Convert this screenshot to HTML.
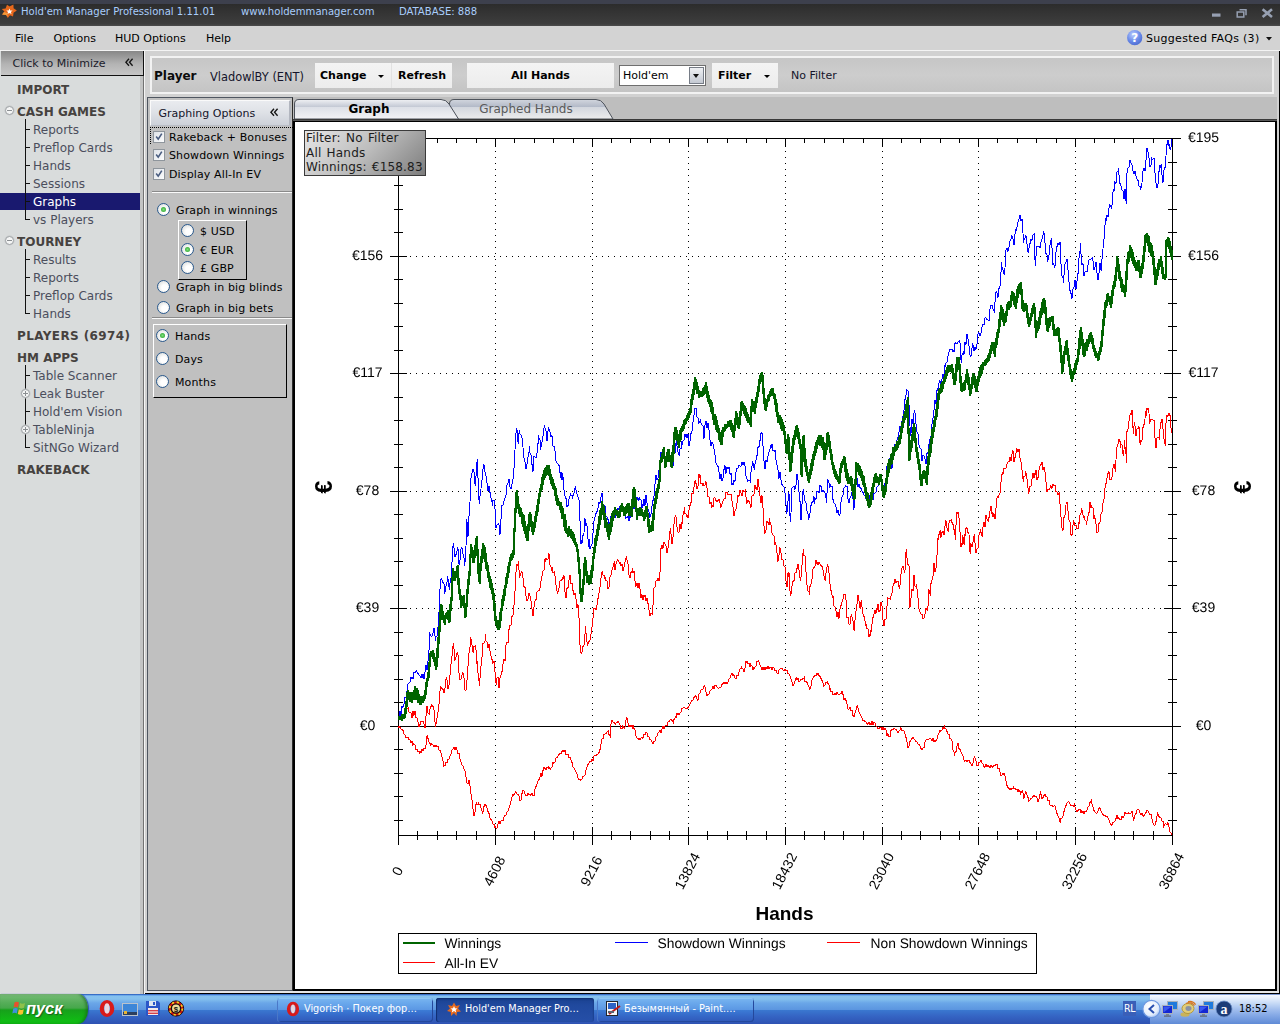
<!DOCTYPE html>
<html lang="en">
<head>
<meta charset="utf-8">
<title>Hold'em Manager Professional</title>
<style>
*{box-sizing:border-box;margin:0;padding:0}
html,body{width:1280px;height:1024px;overflow:hidden;background:#c0c0c0}
body{position:relative;font-family:"DejaVu Sans","Liberation Sans",sans-serif;font-size:12px;color:#000}
.abs{position:absolute}
/* title */
#topstrip{left:0;top:0;width:1280px;height:5px;background:#3d404d}
#titlebar{left:0;top:4px;width:1280px;height:22px;background:linear-gradient(#2c2c2c,#343434 40%,#3d3d3d 90%,#4b4b4b);color:#a9cdfb;font-family:"DejaVu Sans Condensed","DejaVu Sans",sans-serif;font-size:11.2px;line-height:14px;white-space:pre}
#titlebar span{position:absolute;top:1px}
#menubar{left:0;top:26px;width:1280px;height:24px;background:#d3d3d3;font-size:11px}
#menubar span{position:absolute;top:6px;line-height:14px}
#menuline{left:0;top:50px;width:1280px;height:1px;background:#f4f4f4}
/* sidebar */
#side{left:0;top:51px;width:144px;height:943px;background:#d9dcdc}
#sidehdr{left:1px;top:51px;width:143px;height:25px;background:linear-gradient(#878787,#b4b4b4 55%,#c6c6c6);border-bottom:1px solid #111;border-right:1px solid #111;font-size:11px;color:#1b1b2b}
#sidehdr span{position:absolute;left:11.5px;top:6px;line-height:14px}
#sidestrip{left:140px;top:76px;width:4px;height:918px;background:#c3c4c4;border-right:1px solid #727272}
.nav{position:absolute;left:0;width:140px;height:18px;line-height:21px;overflow:hidden;font-size:12px;color:#4b4e5c;white-space:nowrap}
.nav.h{font-weight:bold;color:#46423f;left:17px}
.nav.i{padding-left:33px}
.nav.sel{background:#19196f;color:#fff;margin-top:1px;height:17px;line-height:19px}
.tl{position:absolute;background:#111}
.circ{position:absolute;width:9px;height:9px;border-radius:50%;border:1px solid #9fa3a6;background:#f4f5f5;box-shadow:0 0 0 .5px #c4c7c8}
.circ i{position:absolute;left:1px;top:3px;width:5px;height:1px;background:#8b8f92}
.circ b{position:absolute;left:3px;top:1px;width:1px;height:5px;background:#8b8f92}
/* main */
#main{left:144px;top:51px;width:1136px;height:943px;background:#d1d1d1;border-right:1px solid #000;border-bottom:1px solid #000}
#tabrow{left:293px;top:97px;width:984px;height:23px;background:#bebebe}
#botstrip{left:145px;top:991px;width:1134px;height:2px;background:#e6e6e6}
#mainL{left:144px;top:51px;width:1px;height:943px;background:#f4f4f4}
#playerbar{left:150px;top:56px;width:1124px;height:38px;border:2px solid #f2f2f2;background:linear-gradient(#c6c6c6,#cdcdcd 50%,#c4c4c4)}
.btn{position:absolute;top:63px;height:25px;background:linear-gradient(#f4f4f4,#ececec);font-weight:bold;font-size:11px;line-height:26px;text-align:center;color:#000}
/* options panel */
#opt{left:147px;top:97px;width:146px;height:894px;border:1px solid #4f5660;border-right:1px solid #2b2b2b;background:#c0c0c0}
#opthdr{left:150px;top:100px;width:141px;height:26px;border:1px solid #fafafa;border-right:2px solid #b2b6bf;border-bottom:1px solid #b9bdc6;background:linear-gradient(#e9ebef,#dfe2e7 45%,#cdd1d9);font-size:11px;color:#14142a}
#opthdr span{position:absolute;left:7.5px;top:6px;line-height:14px}
.ot{position:absolute;font-size:11px;letter-spacing:.13px;line-height:16px;white-space:nowrap;color:#000}
.cb{position:absolute;width:12px;height:12px;border:1px solid #8e959c;background:linear-gradient(135deg,#dfe3e8,#fbfcfd)}
.rd{position:absolute;width:13px;height:13px;border-radius:50%;border:1px solid #2b5a8e;background:radial-gradient(circle at 60% 60%,#fff 30%,#d8dad8 90%)}
.rd.on:after{content:"";position:absolute;left:3px;top:3px;width:5px;height:5px;border-radius:50%;background:radial-gradient(#7fe07f,#1f9a1f)}
.grp{position:absolute;border:1px solid;border-color:#fff #000 #000 #fff}
.sep{position:absolute;left:152px;width:140px;height:2px;border-top:1px solid #8a8a8a;background:#fafafa}
/* chart */
#chartbox{left:293px;top:119px;width:984px;height:872px;background:linear-gradient(#3a3a3a 0,#3a3a3a 1px,#585858 1px,#585858 2px,#000 2px)}
#chartin{left:295px;top:122px;width:980px;height:867px;background:#fff}
#filterbox{left:304px;top:130px;width:122px;height:46px;border:1px solid #3a3a3a;background:linear-gradient(135deg,#e6e6e6,#bdbdbd 50%,#7d7d7d);font-size:12px;line-height:14.7px;color:#1c1c1c;padding:0 0 0 1px;white-space:nowrap;letter-spacing:.18px;word-spacing:1.2px}
/* taskbar */
#task{left:0;top:994px;width:1280px;height:30px;background:linear-gradient(#1f4fae 0,#5c9ae6 1.2px,#86c2ee 2px,#84c0ee 5px,#6aa6e8 9px,#5c96e0 15.5px,#3a78d0 16px,#3565c4 22px,#2e52b2 30px);font-family:"DejaVu Sans Condensed","DejaVu Sans",sans-serif;font-size:11px;color:#fff}
.tb{position:absolute;top:998px;height:24px;border-radius:3px;background:linear-gradient(#7ab6f0 0,#6aa8ec 5px,#5c98e4 11.5px,#3c7cd6 12px,#3568c8 18px,#3058b8 24px);box-shadow:inset 0 1px 0 #8cc4f4, inset 1px 0 0 #4a78c8, inset -1px -1px 0 #24489c}
.tb.act{background:linear-gradient(#1a4190,#20499e 30%,#264fa8);box-shadow:inset 0 1px 2px #0f2c6c, inset 1px 0 0 #123278}
.tbt{position:absolute;top:1002px;font-family:"DejaVu Sans Condensed","DejaVu Sans",sans-serif;font-size:10.8px;line-height:14px;color:#fff;white-space:nowrap}
</style>
</head>
<body>
<div class="abs" id="topstrip"></div>
<div class="abs" id="titlebar"><span style="left:21px">Hold'em Manager Professional 1.11.01</span><span style="left:241px">www.holdemmanager.com</span><span style="left:399px">DATABASE: 888</span></div>
<svg class="abs" style="left:1px;top:4px" width="18" height="16" viewBox="0 0 18 16"><path d="M6 0.8 L8.6 2.6 L12.4 0.6 L12.6 4.2 L15.8 6.6 L12.6 8.8 L12 12.6 L9 11.2 L6.8 14 L5 11 L1 10.6 L3.4 7.6 L0.8 5 L4.6 4.4Z" fill="#e8681c"/><path d="M8.4 4.4 L9.3 6.4 L11.6 6.5 L9.9 7.9 L10.5 10 L8.5 8.9 L6.4 10 L7 7.9 L5.3 6.5 L7.6 6.4Z" fill="#fff"/><path d="M3 8 L6 9 L7 12.5 L5 11 L1.2 10.6Z" fill="#f29a3a"/></svg>
<div class="abs" id="menubar"><span style="left:15px">File</span><span style="left:53.5px">Options</span><span style="left:115px">HUD Options</span><span style="left:206px">Help</span><span style="left:1146px;letter-spacing:.3px">Suggested FAQs (3)</span></div>
<div class="abs" id="menuline"></div>
<svg class="abs" style="left:1120px;top:4px" width="160" height="46" viewBox="1120 4 160 46">
<rect x="1212" y="13.5" width="8.5" height="3.2" fill="#97a0b2"/>
<path d="M1239.5 9.8 h6.5 v5.4 M1237.2 12 h6.6 v5 h-6.6z" fill="none" stroke="#97a0b2" stroke-width="1.5"/>
<path d="M1262.6 9.2 L1272 17 M1272 9.2 L1262.6 17" stroke="#97a0b2" stroke-width="2.6" fill="none"/>
<defs><radialGradient id="hq" cx=".4" cy=".3" r=".8"><stop offset="0" stop-color="#b9ccff"/><stop offset=".55" stop-color="#6a8ae8"/><stop offset="1" stop-color="#4464cc"/></radialGradient></defs>
<circle cx="1134.7" cy="37.7" r="7.6" fill="url(#hq)"/>
<text x="1134.7" y="42" font-size="12" font-weight="bold" text-anchor="middle" font-family="'DejaVu Sans',sans-serif" fill="#fff">?</text>
<path d="M1266 37 h6 l-3 3.4z" fill="#111"/>
</svg>

<div class="abs" id="side"></div>
<div class="abs" id="sidestrip"></div>
<div class="abs" id="sidehdr"><span>Click to Minimize</span></div>
<div class="nav h" style="top:80px">IMPORT</div>
<div class="nav h" style="top:102px">CASH GAMES</div>
<div class="circ" style="left:5px;top:106px"><i></i></div>
<div class="nav i" style="top:120px">Reports</div>
<div class="nav i" style="top:138px">Preflop Cards</div>
<div class="nav i" style="top:156px">Hands</div>
<div class="nav i" style="top:174px">Sessions</div>
<div class="nav i sel" style="top:192px">Graphs</div>
<div class="nav i" style="top:210px">vs Players</div>
<div class="nav h" style="top:232px">TOURNEY</div>
<div class="circ" style="left:5px;top:236px"><i></i></div>
<div class="nav i" style="top:250px">Results</div>
<div class="nav i" style="top:268px">Reports</div>
<div class="nav i" style="top:286px">Preflop Cards</div>
<div class="nav i" style="top:304px">Hands</div>
<div class="nav h" style="top:326px;letter-spacing:.4px">PLAYERS (6974)</div>
<div class="nav h" style="top:348px">HM APPS</div>
<div class="nav i" style="top:366px">Table Scanner</div>
<div class="nav i" style="top:384px">Leak Buster</div>
<div class="nav i" style="top:402px">Hold'em Vision</div>
<div class="nav i" style="top:420px">TableNinja</div>
<div class="nav i" style="top:438px">SitNGo Wizard</div>
<div class="nav h" style="top:460px">RAKEBACK</div>
<div class="tl" style="left:25px;top:119px;width:1px;height:101px"></div>
<div class="tl" style="left:25px;top:129px;width:5px;height:1px"></div>
<div class="tl" style="left:25px;top:147px;width:5px;height:1px"></div>
<div class="tl" style="left:25px;top:165px;width:5px;height:1px"></div>
<div class="tl" style="left:25px;top:183px;width:5px;height:1px"></div>
<div class="tl" style="left:25px;top:201px;width:5px;height:1px"></div>
<div class="tl" style="left:25px;top:219px;width:5px;height:1px"></div>
<div class="tl" style="left:25px;top:249px;width:1px;height:65px"></div>
<div class="tl" style="left:25px;top:259px;width:5px;height:1px"></div>
<div class="tl" style="left:25px;top:277px;width:5px;height:1px"></div>
<div class="tl" style="left:25px;top:295px;width:5px;height:1px"></div>
<div class="tl" style="left:25px;top:313px;width:5px;height:1px"></div>
<div class="tl" style="left:25px;top:365px;width:1px;height:83px"></div>
<div class="tl" style="left:25px;top:375px;width:5px;height:1px"></div>
<div class="tl" style="left:25px;top:393px;width:5px;height:1px"></div>
<div class="tl" style="left:25px;top:411px;width:5px;height:1px"></div>
<div class="tl" style="left:25px;top:429px;width:5px;height:1px"></div>
<div class="tl" style="left:25px;top:447px;width:5px;height:1px"></div>
<div class="circ" style="left:21px;top:389px"><i></i><b></b></div>
<div class="circ" style="left:21px;top:425px"><i></i><b></b></div>

<svg class="abs" style="left:124.5px;top:58px" width="9" height="9" viewBox="0 0 9 9"><path d="M4 0.8 L0.9 4.3 L4 7.8 M7.6 0.8 L4.5 4.3 L7.6 7.8" fill="none" stroke="#151515" stroke-width="1.35"/></svg>
<div class="abs" id="main"></div>
<div class="abs" id="mainL"></div>
<div class="abs" id="tabrow"></div>
<div class="abs" id="botstrip"></div>
<div class="abs" id="playerbar"></div>
<div class="abs" style="left:154px;top:68px;font-size:12px;font-weight:bold;line-height:16px;color:#0c0c0c">Player</div>
<div class="abs" style="left:210px;top:70px;font-size:11.4px;line-height:14px;color:#14142a">VladowlBY (ENT)</div>
<div class="btn" style="left:315px;width:77px;text-align:left;padding-left:5px">Change</div>
<div class="abs" style="left:378px;top:75px;width:0;height:0;border:3px solid transparent;border-top:3px solid #000"></div>
<div class="btn" style="left:392px;width:60px">Refresh</div>
<div class="abs" style="left:391px;top:63px;width:1px;height:25px;background:#e2e2e2"></div>
<div class="btn" style="left:467px;width:147px">All Hands</div>
<div class="abs" style="left:619px;top:65px;width:87px;height:21px;border:1px solid #6f6f6f;background:#fff;font-size:11px;line-height:20px;padding-left:3px">Hold'em</div>
<div class="abs" style="left:689px;top:67px;width:15px;height:17px;border:1px solid #767c86;background:linear-gradient(#eef0f3,#c4c9d2)"></div>
<div class="abs" style="left:693px;top:74px;width:0;height:0;border:3.5px solid transparent;border-top:4px solid #111"></div>
<div class="btn" style="left:712px;width:66px;text-align:left;padding-left:6px">Filter</div>
<div class="abs" style="left:764px;top:75px;width:0;height:0;border:3px solid transparent;border-top:3px solid #000"></div>
<div class="abs" style="left:791px;top:69px;font-size:11px;line-height:14px;color:#14142a">No Filter</div>

<div class="abs" id="opt"></div>
<div class="abs" id="opthdr"><span>Graphing Options</span></div>
<svg class="abs" style="left:269.5px;top:107.5px" width="9" height="9" viewBox="0 0 9 9"><path d="M4 0.8 L0.9 4.3 L4 7.8 M7.6 0.8 L4.5 4.3 L7.6 7.8" fill="none" stroke="#151515" stroke-width="1.35"/></svg>
<div class="abs" style="left:150px;top:127px;width:143px;height:17px;border-top:1px dotted #000;border-left:1px dotted #000"></div>
<div class="cb" style="left:153px;top:131px"><svg width="10" height="10" viewBox="0 0 10 10" style="position:absolute;left:0;top:0"><path d="M2.2 4.6 L4.2 7.2 L7.8 1.6" fill="none" stroke="#4a5d80" stroke-width="1.6"/></svg></div>
<div class="ot" style="left:169px;top:130px">Rakeback + Bonuses</div>
<div class="cb" style="left:153px;top:149px"><svg width="10" height="10" viewBox="0 0 10 10" style="position:absolute;left:0;top:0"><path d="M2.2 4.6 L4.2 7.2 L7.8 1.6" fill="none" stroke="#4a5d80" stroke-width="1.6"/></svg></div>
<div class="ot" style="left:169px;top:148px">Showdown Winnings</div>
<div class="cb" style="left:153px;top:168px"><svg width="10" height="10" viewBox="0 0 10 10" style="position:absolute;left:0;top:0"><path d="M2.2 4.6 L4.2 7.2 L7.8 1.6" fill="none" stroke="#4a5d80" stroke-width="1.6"/></svg></div>
<div class="ot" style="left:169px;top:167px">Display All-In EV</div>
<div class="sep" style="top:191px"></div>
<div class="rd on" style="left:157px;top:203px"></div><div class="ot" style="left:176px;top:203px">Graph in winnings</div>
<div class="grp" style="left:178px;top:220px;width:69px;height:60px"></div>
<div class="rd" style="left:181px;top:224px"></div><div class="ot" style="left:200px;top:224px">$ USD</div>
<div class="rd on" style="left:181px;top:243px"></div><div class="ot" style="left:200px;top:243px">€ EUR</div>
<div class="rd" style="left:181px;top:261px"></div><div class="ot" style="left:200px;top:261px">£ GBP</div>
<div class="rd" style="left:157px;top:280px"></div><div class="ot" style="left:176px;top:280px">Graph in big blinds</div>
<div class="rd" style="left:157px;top:301px"></div><div class="ot" style="left:176px;top:301px">Graph in big bets</div>
<div class="sep" style="top:317px"></div>
<div class="grp" style="left:153px;top:324px;width:134px;height:74px"></div>
<div class="rd on" style="left:156px;top:329px"></div><div class="ot" style="left:175px;top:329px">Hands</div>
<div class="rd" style="left:156px;top:352px"></div><div class="ot" style="left:175px;top:352px">Days</div>
<div class="rd" style="left:156px;top:375px"></div><div class="ot" style="left:175px;top:375px">Months</div>

<svg class="abs" style="left:290px;top:96px" width="340" height="26" viewBox="290 96 340 26">
<defs><linearGradient id="tg" x1="0" y1="0" x2="0" y2="1"><stop offset="0" stop-color="#f0f1f4"/><stop offset=".38" stop-color="#c3c8d4"/><stop offset=".41" stop-color="#dde0e7"/><stop offset="1" stop-color="#f3f3f5"/></linearGradient>
<linearGradient id="tg2" x1="0" y1="0" x2="0" y2="1"><stop offset="0" stop-color="#d2d6de"/><stop offset=".38" stop-color="#b2b9c7"/><stop offset=".41" stop-color="#d3d7de"/><stop offset="1" stop-color="#ececec"/></linearGradient></defs>
<path d="M449.5 119 L449.5 104 Q449.5 99.5 454 99.5 L596 99.5 Q601 99.5 604 104 L613 119 Z" fill="url(#tg2)" stroke="#4f545c" stroke-width="1"/>
<path d="M294.5 119 L294.5 104 Q294.5 99.5 299 99.5 L441 99.5 Q446 99.5 449 104 L458.5 119 Z" fill="url(#tg)" stroke="#4a4f58" stroke-width="1"/>
</svg>
<div class="abs" style="left:294px;top:102px;width:150px;text-align:center;font-weight:bold;font-size:12px;line-height:15px">Graph</div>
<div class="abs" style="left:452px;top:102px;width:148px;text-align:center;font-size:12px;line-height:15px;color:#5a5a5a">Graphed Hands</div>
<div class="abs" id="chartbox"></div>
<div class="abs" id="chartin"></div>
<svg id="chart" width="1280" height="1024" viewBox="0 0 1280 1024" style="position:absolute;left:0;top:0;will-change:transform" shape-rendering="crispEdges">
<g stroke="#000" stroke-width="1" stroke-dasharray="1 5" fill="none">
<line x1="495.5" y1="139" x2="495.5" y2="835"/>
<line x1="592.5" y1="139" x2="592.5" y2="835"/>
<line x1="688.5" y1="139" x2="688.5" y2="835"/>
<line x1="785.5" y1="139" x2="785.5" y2="835"/>
<line x1="882.5" y1="139" x2="882.5" y2="835"/>
<line x1="978.5" y1="139" x2="978.5" y2="835"/>
<line x1="1075.5" y1="139" x2="1075.5" y2="835"/>
<line x1="410" y1="256.5" x2="1172" y2="256.5"/>
<line x1="410" y1="373.5" x2="1172" y2="373.5"/>
<line x1="410" y1="491.5" x2="1172" y2="491.5"/>
<line x1="410" y1="608.5" x2="1172" y2="608.5"/>
</g>
<g stroke="#000" stroke-width="1" fill="none">
<rect x="398.5" y="138.5" width="774" height="697"/>
<line x1="398" y1="726.5" x2="1172" y2="726.5"/>
<line x1="390" y1="138.5" x2="407" y2="138.5"/>
<line x1="1164" y1="138.5" x2="1181" y2="138.5"/>
<line x1="394" y1="162.5" x2="403" y2="162.5"/>
<line x1="1168" y1="162.5" x2="1177" y2="162.5"/>
<line x1="394" y1="185.5" x2="403" y2="185.5"/>
<line x1="1168" y1="185.5" x2="1177" y2="185.5"/>
<line x1="394" y1="209.5" x2="403" y2="209.5"/>
<line x1="1168" y1="209.5" x2="1177" y2="209.5"/>
<line x1="394" y1="232.5" x2="403" y2="232.5"/>
<line x1="1168" y1="232.5" x2="1177" y2="232.5"/>
<line x1="390" y1="256.5" x2="407" y2="256.5"/>
<line x1="1164" y1="256.5" x2="1181" y2="256.5"/>
<line x1="394" y1="279.5" x2="403" y2="279.5"/>
<line x1="1168" y1="279.5" x2="1177" y2="279.5"/>
<line x1="394" y1="303.5" x2="403" y2="303.5"/>
<line x1="1168" y1="303.5" x2="1177" y2="303.5"/>
<line x1="394" y1="326.5" x2="403" y2="326.5"/>
<line x1="1168" y1="326.5" x2="1177" y2="326.5"/>
<line x1="394" y1="350.5" x2="403" y2="350.5"/>
<line x1="1168" y1="350.5" x2="1177" y2="350.5"/>
<line x1="390" y1="373.5" x2="407" y2="373.5"/>
<line x1="1164" y1="373.5" x2="1181" y2="373.5"/>
<line x1="394" y1="397.5" x2="403" y2="397.5"/>
<line x1="1168" y1="397.5" x2="1177" y2="397.5"/>
<line x1="394" y1="420.5" x2="403" y2="420.5"/>
<line x1="1168" y1="420.5" x2="1177" y2="420.5"/>
<line x1="394" y1="444.5" x2="403" y2="444.5"/>
<line x1="1168" y1="444.5" x2="1177" y2="444.5"/>
<line x1="394" y1="467.5" x2="403" y2="467.5"/>
<line x1="1168" y1="467.5" x2="1177" y2="467.5"/>
<line x1="390" y1="491.5" x2="407" y2="491.5"/>
<line x1="1164" y1="491.5" x2="1181" y2="491.5"/>
<line x1="394" y1="514.5" x2="403" y2="514.5"/>
<line x1="1168" y1="514.5" x2="1177" y2="514.5"/>
<line x1="394" y1="538.5" x2="403" y2="538.5"/>
<line x1="1168" y1="538.5" x2="1177" y2="538.5"/>
<line x1="394" y1="561.5" x2="403" y2="561.5"/>
<line x1="1168" y1="561.5" x2="1177" y2="561.5"/>
<line x1="394" y1="585.5" x2="403" y2="585.5"/>
<line x1="1168" y1="585.5" x2="1177" y2="585.5"/>
<line x1="390" y1="608.5" x2="407" y2="608.5"/>
<line x1="1164" y1="608.5" x2="1181" y2="608.5"/>
<line x1="394" y1="632.5" x2="403" y2="632.5"/>
<line x1="1168" y1="632.5" x2="1177" y2="632.5"/>
<line x1="394" y1="655.5" x2="403" y2="655.5"/>
<line x1="1168" y1="655.5" x2="1177" y2="655.5"/>
<line x1="394" y1="679.5" x2="403" y2="679.5"/>
<line x1="1168" y1="679.5" x2="1177" y2="679.5"/>
<line x1="394" y1="702.5" x2="403" y2="702.5"/>
<line x1="1168" y1="702.5" x2="1177" y2="702.5"/>
<line x1="390" y1="726.5" x2="407" y2="726.5"/>
<line x1="1164" y1="726.5" x2="1181" y2="726.5"/>
<line x1="394" y1="749.5" x2="403" y2="749.5"/>
<line x1="1168" y1="749.5" x2="1177" y2="749.5"/>
<line x1="394" y1="773.5" x2="403" y2="773.5"/>
<line x1="1168" y1="773.5" x2="1177" y2="773.5"/>
<line x1="394" y1="796.5" x2="403" y2="796.5"/>
<line x1="1168" y1="796.5" x2="1177" y2="796.5"/>
<line x1="394" y1="820.5" x2="403" y2="820.5"/>
<line x1="1168" y1="820.5" x2="1177" y2="820.5"/>
<line x1="398.5" y1="827" x2="398.5" y2="845"/>
<line x1="417.5" y1="831" x2="417.5" y2="840"/>
<line x1="417.5" y1="138" x2="417.5" y2="143"/>
<line x1="437.5" y1="831" x2="437.5" y2="840"/>
<line x1="437.5" y1="138" x2="437.5" y2="143"/>
<line x1="456.5" y1="831" x2="456.5" y2="840"/>
<line x1="456.5" y1="138" x2="456.5" y2="143"/>
<line x1="476.5" y1="831" x2="476.5" y2="840"/>
<line x1="476.5" y1="138" x2="476.5" y2="143"/>
<line x1="495.5" y1="827" x2="495.5" y2="845"/>
<line x1="495.5" y1="138" x2="495.5" y2="147"/>
<line x1="514.5" y1="831" x2="514.5" y2="840"/>
<line x1="514.5" y1="138" x2="514.5" y2="143"/>
<line x1="534.5" y1="831" x2="534.5" y2="840"/>
<line x1="534.5" y1="138" x2="534.5" y2="143"/>
<line x1="553.5" y1="831" x2="553.5" y2="840"/>
<line x1="553.5" y1="138" x2="553.5" y2="143"/>
<line x1="573.5" y1="831" x2="573.5" y2="840"/>
<line x1="573.5" y1="138" x2="573.5" y2="143"/>
<line x1="592.5" y1="827" x2="592.5" y2="845"/>
<line x1="592.5" y1="138" x2="592.5" y2="147"/>
<line x1="611.5" y1="831" x2="611.5" y2="840"/>
<line x1="611.5" y1="138" x2="611.5" y2="143"/>
<line x1="630.5" y1="831" x2="630.5" y2="840"/>
<line x1="630.5" y1="138" x2="630.5" y2="143"/>
<line x1="650.5" y1="831" x2="650.5" y2="840"/>
<line x1="650.5" y1="138" x2="650.5" y2="143"/>
<line x1="669.5" y1="831" x2="669.5" y2="840"/>
<line x1="669.5" y1="138" x2="669.5" y2="143"/>
<line x1="688.5" y1="827" x2="688.5" y2="845"/>
<line x1="688.5" y1="138" x2="688.5" y2="147"/>
<line x1="707.5" y1="831" x2="707.5" y2="840"/>
<line x1="707.5" y1="138" x2="707.5" y2="143"/>
<line x1="727.5" y1="831" x2="727.5" y2="840"/>
<line x1="727.5" y1="138" x2="727.5" y2="143"/>
<line x1="746.5" y1="831" x2="746.5" y2="840"/>
<line x1="746.5" y1="138" x2="746.5" y2="143"/>
<line x1="766.5" y1="831" x2="766.5" y2="840"/>
<line x1="766.5" y1="138" x2="766.5" y2="143"/>
<line x1="785.5" y1="827" x2="785.5" y2="845"/>
<line x1="785.5" y1="138" x2="785.5" y2="147"/>
<line x1="804.5" y1="831" x2="804.5" y2="840"/>
<line x1="804.5" y1="138" x2="804.5" y2="143"/>
<line x1="824.5" y1="831" x2="824.5" y2="840"/>
<line x1="824.5" y1="138" x2="824.5" y2="143"/>
<line x1="843.5" y1="831" x2="843.5" y2="840"/>
<line x1="843.5" y1="138" x2="843.5" y2="143"/>
<line x1="863.5" y1="831" x2="863.5" y2="840"/>
<line x1="863.5" y1="138" x2="863.5" y2="143"/>
<line x1="882.5" y1="827" x2="882.5" y2="845"/>
<line x1="882.5" y1="138" x2="882.5" y2="147"/>
<line x1="901.5" y1="831" x2="901.5" y2="840"/>
<line x1="901.5" y1="138" x2="901.5" y2="143"/>
<line x1="920.5" y1="831" x2="920.5" y2="840"/>
<line x1="920.5" y1="138" x2="920.5" y2="143"/>
<line x1="940.5" y1="831" x2="940.5" y2="840"/>
<line x1="940.5" y1="138" x2="940.5" y2="143"/>
<line x1="959.5" y1="831" x2="959.5" y2="840"/>
<line x1="959.5" y1="138" x2="959.5" y2="143"/>
<line x1="978.5" y1="827" x2="978.5" y2="845"/>
<line x1="978.5" y1="138" x2="978.5" y2="147"/>
<line x1="997.5" y1="831" x2="997.5" y2="840"/>
<line x1="997.5" y1="138" x2="997.5" y2="143"/>
<line x1="1017.5" y1="831" x2="1017.5" y2="840"/>
<line x1="1017.5" y1="138" x2="1017.5" y2="143"/>
<line x1="1036.5" y1="831" x2="1036.5" y2="840"/>
<line x1="1036.5" y1="138" x2="1036.5" y2="143"/>
<line x1="1056.5" y1="831" x2="1056.5" y2="840"/>
<line x1="1056.5" y1="138" x2="1056.5" y2="143"/>
<line x1="1075.5" y1="827" x2="1075.5" y2="845"/>
<line x1="1075.5" y1="138" x2="1075.5" y2="147"/>
<line x1="1094.5" y1="831" x2="1094.5" y2="840"/>
<line x1="1094.5" y1="138" x2="1094.5" y2="143"/>
<line x1="1114.5" y1="831" x2="1114.5" y2="840"/>
<line x1="1114.5" y1="138" x2="1114.5" y2="143"/>
<line x1="1133.5" y1="831" x2="1133.5" y2="840"/>
<line x1="1133.5" y1="138" x2="1133.5" y2="143"/>
<line x1="1153.5" y1="831" x2="1153.5" y2="840"/>
<line x1="1153.5" y1="138" x2="1153.5" y2="143"/>
<line x1="1172.5" y1="827" x2="1172.5" y2="845"/>
</g>
<polyline fill="none" stroke="#ff0000" stroke-width="1" stroke-linejoin="miter" points="398.0,726.3 399.0,728.2 400.0,726.6 401.0,729.2 402.0,729.4 403.0,730.3 403.1,730.7 404.0,734.0 405.0,734.7 406.0,738.1 407.0,737.3 407.2,737.5 408.0,737.3 409.0,739.5 410.0,740.1 411.0,743.0 412.0,741.2 413.0,745.4 413.3,743.8 414.0,743.8 415.0,745.2 416.0,750.0 417.0,749.5 418.0,751.8 419.0,752.1 419.4,753.0 420.0,751.3 421.0,752.5 422.0,749.5 423.0,750.6 424.0,747.7 425.0,749.2 425.5,748.0 426.0,744.7 427.0,735.8 427.1,734.9 428.0,738.5 429.0,741.7 430.0,743.7 430.5,744.9 431.0,743.5 432.0,744.9 433.0,744.9 434.0,746.6 435.0,745.5 436.0,747.3 436.6,744.8 437.0,746.7 438.0,746.0 439.0,750.1 440.0,750.3 440.7,751.2 441.0,753.0 442.0,756.6 443.0,760.6 443.8,765.4 444.0,765.0 445.0,765.5 446.0,762.5 447.0,763.0 448.0,759.2 448.8,759.2 449.0,759.1 450.0,755.8 451.0,753.9 452.0,750.2 452.9,749.3 453.0,749.3 454.0,747.5 455.0,749.8 455.9,747.1 456.0,747.2 457.0,750.2 458.0,753.5 459.0,753.1 460.0,759.0 461.0,761.6 462.0,764.8 463.0,765.7 464.0,769.0 465.0,770.9 465.1,771.5 466.0,776.6 467.0,782.9 467.1,783.5 468.0,783.7 469.0,780.4 469.5,781.5 470.0,786.2 471.0,793.8 472.0,800.2 472.2,801.8 473.0,809.3 474.0,815.5 474.2,816.3 475.0,812.6 476.0,804.5 476.3,803.2 477.0,804.6 478.0,804.5 478.5,802.6 479.0,804.8 480.0,803.9 481.0,807.8 481.3,808.2 482.0,811.1 482.8,813.2 483.0,812.4 484.0,806.5 484.4,805.6 485.0,803.8 486.0,806.4 486.5,805.6 487.0,808.0 488.0,811.4 488.4,813.5 489.0,812.7 490.0,818.3 491.0,819.9 491.5,820.0 492.0,820.9 493.0,824.3 494.0,824.5 494.5,827.0 495.0,825.6 496.0,828.3 496.6,828.4 497.0,828.4 498.0,823.7 498.6,822.4 499.0,821.5 500.0,824.0 501.0,821.0 502.0,820.5 502.7,820.2 503.0,821.3 504.0,816.7 505.0,814.9 505.7,815.8 506.0,814.8 507.0,811.9 508.0,810.8 508.8,808.5 509.0,808.4 510.0,805.4 511.0,801.3 511.8,797.8 512.0,797.4 513.0,794.5 514.0,795.4 515.0,793.1 515.9,791.6 516.0,791.7 517.0,793.9 518.0,794.4 518.9,795.4 519.0,795.9 519.9,801.3 520.0,800.9 521.0,800.1 522.0,793.5 523.0,790.3 524.0,791.1 525.0,794.0 526.0,795.4 527.0,795.9 528.0,793.6 529.0,794.7 530.0,794.0 531.0,795.4 532.0,793.6 533.0,795.5 534.0,795.7 534.1,795.2 535.0,788.9 536.0,786.5 536.2,785.9 537.0,784.3 538.0,781.0 539.0,779.6 539.2,779.2 540.0,777.0 541.0,773.4 542.0,776.5 542.3,772.3 543.0,770.5 544.0,767.0 545.0,769.3 545.3,768.5 546.0,770.0 547.0,767.2 548.0,767.2 548.4,766.9 549.0,768.5 550.0,767.5 550.4,770.2 551.0,767.7 552.0,767.2 553.0,762.1 553.4,762.9 554.0,762.2 555.0,762.0 556.0,757.6 557.0,757.9 557.5,757.1 558.0,756.0 559.0,754.4 560.0,753.1 560.6,753.4 561.0,754.1 562.0,751.5 563.0,750.2 563.6,750.1 564.0,751.6 565.0,750.3 566.0,754.7 567.0,754.0 567.7,754.9 568.0,754.3 569.0,758.3 570.0,756.8 570.5,758.3 571.0,759.7 572.0,762.5 572.7,765.1 573.0,767.2 574.0,768.0 575.0,770.1 575.8,771.4 576.0,772.1 577.0,773.8 578.0,777.6 578.8,779.7 579.0,779.8 580.0,779.6 581.0,780.3 581.9,779.2 582.0,779.1 583.0,776.6 584.0,776.0 584.9,775.3 585.0,775.3 586.0,770.0 587.0,767.4 588.0,764.5 589.0,763.2 590.0,761.5 591.0,762.2 592.0,758.8 593.0,761.1 594.0,756.5 594.1,755.5 595.0,754.9 596.0,755.8 597.0,754.6 598.0,753.9 598.1,754.0 599.0,752.6 600.0,749.6 600.2,749.1 601.0,744.3 602.0,739.3 602.2,738.8 603.0,738.9 604.0,734.3 605.0,734.0 605.2,733.7 606.0,733.6 607.0,731.7 608.0,732.1 608.3,731.5 609.0,734.4 610.0,735.7 610.3,738.0 611.0,723.7 611.3,720.8 612.0,719.8 613.0,722.3 614.0,722.0 615.0,723.7 615.4,724.3 616.0,722.7 617.0,723.0 618.0,721.4 618.4,721.6 619.0,722.8 620.0,725.2 621.0,729.1 621.5,728.4 622.0,728.6 623.0,725.6 624.0,727.4 624.5,728.1 625.0,727.1 626.0,719.9 626.6,717.9 627.0,718.3 628.0,722.6 628.6,726.1 629.0,726.5 630.0,725.1 631.0,727.1 632.0,725.1 633.0,728.8 633.7,726.5 634.0,727.7 635.0,729.9 635.7,734.5 636.0,736.1 637.0,738.3 638.0,738.7 638.7,739.5 639.0,738.4 640.0,739.6 641.0,737.7 641.8,737.1 642.0,736.8 643.0,738.4 644.0,733.8 645.0,734.8 645.9,732.7 646.0,732.9 647.0,732.7 648.0,736.8 649.0,737.1 650.0,740.0 651.0,739.9 652.0,742.0 652.6,743.1 653.0,743.7 654.0,741.0 655.0,741.0 656.0,736.8 657.0,736.5 658.0,732.7 659.0,731.9 660.0,730.2 661.0,732.5 662.0,729.4 662.1,729.0 663.0,725.7 664.0,728.5 665.0,725.6 666.0,725.1 666.2,725.0 667.0,726.0 668.0,722.0 669.0,721.9 670.0,719.7 670.2,719.4 671.0,719.3 672.0,720.7 673.0,721.7 673.3,722.5 674.0,719.6 675.0,718.4 676.0,715.7 676.3,716.5 677.0,712.9 678.0,715.1 679.0,712.7 679.4,714.8 680.0,712.7 681.0,712.0 682.0,708.4 683.0,707.8 683.4,707.3 684.0,707.0 685.0,708.1 686.0,708.3 687.0,708.3 687.5,708.8 688.0,707.4 689.0,705.7 690.0,704.3 691.0,702.1 691.6,701.0 692.0,701.3 693.0,700.3 694.0,697.6 695.0,696.4 695.6,695.9 696.0,696.1 697.0,698.7 697.7,700.3 698.0,700.3 699.0,693.8 700.0,693.5 700.7,690.6 701.0,690.0 702.0,689.3 703.0,689.1 704.0,686.1 704.8,685.9 705.0,686.7 706.0,691.7 706.8,695.3 707.0,695.4 708.0,694.3 709.0,694.0 710.0,690.8 710.9,689.9 711.0,690.3 712.0,689.1 713.0,686.1 714.0,688.7 714.9,685.5 715.0,685.2 716.0,685.4 717.0,687.2 718.0,687.9 719.0,688.2 720.0,687.1 721.0,687.0 722.0,684.6 723.0,683.4 724.0,682.4 725.0,684.3 726.0,681.9 727.0,683.4 728.0,682.4 728.1,682.2 729.0,678.6 730.0,678.1 731.0,674.6 731.2,673.9 732.0,673.0 733.0,675.7 734.0,674.6 735.0,678.1 735.2,678.3 736.0,679.2 737.0,675.1 738.0,676.1 738.3,673.5 739.0,672.3 740.0,668.8 741.0,668.5 741.3,666.8 742.0,668.7 743.0,668.7 744.0,671.5 744.4,670.4 745.0,668.1 746.0,661.3 746.4,662.4 747.0,661.3 748.0,664.2 749.0,663.3 750.0,667.0 750.5,664.6 751.0,665.6 752.0,666.1 753.0,669.6 754.0,667.4 754.5,668.2 755.0,666.8 756.0,666.5 757.0,661.4 758.0,661.8 758.6,660.8 759.0,662.3 760.0,664.8 761.0,666.9 761.6,668.0 762.0,670.1 763.0,667.4 764.0,670.2 765.0,667.6 765.7,670.0 766.0,667.3 767.0,669.2 768.0,666.4 769.0,669.0 769.8,667.6 770.0,667.4 771.0,666.8 772.0,670.2 773.0,667.0 773.8,667.9 774.0,667.8 775.0,670.5 776.0,670.0 777.0,673.0 777.9,674.1 778.0,674.0 779.0,670.0 780.0,669.0 781.0,668.6 782.0,668.2 783.0,669.9 784.0,671.3 785.0,669.2 786.0,670.8 787.0,670.2 788.0,673.8 789.0,673.7 789.1,674.0 790.0,676.0 791.0,679.2 792.0,682.0 793.0,685.6 793.1,685.7 794.0,683.8 795.0,681.2 796.0,677.9 796.2,677.3 797.0,679.8 798.0,678.4 799.0,681.5 800.0,681.1 800.2,680.4 801.0,679.7 802.0,679.6 803.0,678.5 804.0,678.5 804.3,677.8 805.0,681.5 806.0,681.1 807.0,682.9 807.3,682.7 808.0,685.4 809.0,686.9 809.8,689.5 810.0,688.5 811.0,685.8 812.0,680.2 813.0,678.0 813.4,676.7 814.0,676.8 815.0,675.6 816.0,675.9 817.0,673.6 817.5,674.1 818.0,673.2 819.0,675.7 820.0,676.4 820.6,677.1 821.0,678.5 822.0,680.5 823.0,682.5 823.6,685.9 824.0,685.7 825.0,685.5 826.0,681.9 827.0,682.2 827.3,680.7 828.0,683.5 829.0,684.5 829.7,688.3 830.0,687.7 831.0,691.4 832.0,691.1 832.7,694.5 833.0,694.5 834.0,694.6 835.0,693.3 836.0,694.8 837.0,691.8 837.8,693.4 838.0,693.9 839.0,694.2 840.0,693.9 841.0,693.7 842.0,691.1 842.9,693.9 843.0,694.5 844.0,699.7 845.0,698.6 845.9,700.2 846.0,700.5 847.0,704.1 848.0,709.0 849.0,709.0 850.0,707.4 851.0,710.7 852.0,710.4 853.0,715.6 854.0,716.5 854.1,716.5 855.0,712.7 856.0,709.9 857.0,706.5 857.1,705.6 858.0,707.8 859.0,711.9 859.1,712.0 860.0,713.9 861.0,715.7 862.0,718.3 862.2,718.9 863.0,721.0 864.0,720.4 865.0,721.5 866.0,722.2 866.3,723.5 867.0,723.2 868.0,724.4 869.0,722.4 870.0,724.7 870.3,723.4 871.0,725.0 872.0,721.0 873.0,725.1 874.0,722.5 875.0,722.8 875.4,723.1 876.0,725.8 877.0,726.7 878.0,728.8 878.4,728.3 879.0,729.2 880.0,727.2 881.0,727.8 881.5,727.9 882.0,729.5 883.0,727.0 884.0,729.5 885.0,728.4 885.5,729.1 886.0,730.0 887.0,735.7 888.0,733.6 888.6,736.4 889.0,735.9 890.0,736.7 891.0,729.7 891.6,730.1 892.0,729.8 893.0,729.8 894.0,728.6 895.0,729.2 895.7,729.2 896.0,729.5 897.0,730.8 897.7,731.8 898.0,732.6 899.0,731.3 900.0,729.7 900.8,727.8 901.0,728.0 902.0,730.5 903.0,729.9 903.8,731.0 904.0,731.3 905.0,734.2 906.0,737.5 906.9,741.2 907.0,741.8 908.0,747.8 908.5,747.3 909.0,746.3 910.0,741.4 911.0,740.1 911.9,738.6 912.0,738.6 913.0,736.9 914.0,739.1 915.0,740.0 916.0,741.6 917.0,741.9 918.0,744.2 919.0,744.3 919.1,745.0 920.0,746.2 921.0,748.6 922.0,749.4 922.7,750.0 923.0,747.7 924.0,747.7 925.0,741.8 925.2,740.8 926.0,739.8 927.0,739.5 928.0,740.0 929.0,739.2 929.2,738.9 930.0,738.7 931.0,739.1 932.0,741.2 933.0,738.5 934.0,741.5 935.0,740.4 936.0,741.4 936.3,739.7 937.0,738.7 938.0,735.2 939.0,733.0 940.0,730.5 940.4,731.6 941.0,730.8 942.0,729.9 943.0,726.8 944.0,728.4 944.5,726.8 945.0,728.8 946.0,728.8 947.0,731.6 947.5,732.3 948.0,734.3 949.0,734.4 950.0,738.7 951.0,738.8 951.6,740.9 952.0,741.2 953.0,750.2 954.0,752.2 954.6,756.0 955.0,753.4 956.0,751.6 957.0,746.0 957.7,743.6 958.0,743.0 959.0,748.8 960.0,749.3 960.7,751.2 961.0,752.1 962.0,754.3 963.0,756.2 964.0,759.8 964.8,761.1 965.0,760.6 966.0,760.0 967.0,761.8 968.0,759.9 968.8,760.2 969.0,760.6 970.0,762.5 971.0,763.7 971.9,765.3 972.0,765.8 973.0,763.3 974.0,757.8 974.5,757.1 975.0,758.2 976.0,761.2 977.0,765.8 978.0,766.0 979.0,762.2 980.0,762.0 981.0,760.0 982.0,762.9 983.0,764.2 984.0,767.3 984.1,767.1 985.0,766.9 986.0,764.4 987.0,767.1 988.0,765.6 989.0,766.3 989.1,766.4 990.0,767.6 991.0,765.1 992.0,767.3 993.0,766.5 993.2,766.1 994.0,765.2 995.0,765.4 996.0,764.0 996.3,764.2 997.0,764.3 998.0,768.4 999.0,768.2 999.3,769.3 1000.0,771.7 1001.0,776.2 1001.3,775.4 1002.0,775.0 1003.0,772.7 1004.0,774.4 1004.4,772.8 1005.0,776.3 1006.0,781.3 1006.4,784.6 1007.0,785.5 1008.0,787.4 1009.0,788.9 1009.5,789.6 1010.0,788.5 1011.0,789.9 1012.0,788.0 1013.0,789.0 1013.5,787.3 1014.0,788.5 1015.0,788.0 1016.0,789.9 1017.0,789.2 1017.6,790.6 1018.0,789.1 1019.0,792.3 1020.0,790.5 1020.6,793.6 1021.0,793.0 1022.0,790.8 1022.7,790.2 1023.0,792.7 1023.7,798.4 1024.0,798.5 1025.0,793.9 1025.7,791.9 1026.0,792.2 1027.0,795.4 1028.0,797.5 1028.8,800.8 1029.0,800.6 1030.0,800.0 1031.0,797.9 1032.0,798.4 1032.8,796.6 1033.0,796.5 1034.0,795.1 1035.0,796.7 1035.9,796.0 1036.0,796.1 1037.0,797.9 1037.9,801.5 1038.0,801.5 1039.0,798.8 1040.0,794.6 1040.5,792.7 1041.0,794.4 1042.0,798.5 1043.0,797.4 1044.0,795.6 1045.0,793.9 1046.0,796.7 1047.0,796.7 1048.0,800.7 1049.0,800.5 1050.0,805.1 1051.0,805.8 1051.1,805.8 1052.0,805.6 1053.0,806.6 1054.0,806.1 1055.0,805.9 1055.2,806.0 1056.0,809.6 1057.0,813.4 1057.2,814.0 1058.0,815.6 1059.0,818.2 1060.0,821.9 1060.2,822.7 1061.0,818.5 1062.0,818.1 1062.3,816.7 1063.0,815.9 1064.0,811.6 1065.0,808.0 1065.3,805.6 1066.0,806.3 1067.0,802.7 1068.0,802.1 1068.4,801.6 1069.0,801.6 1070.0,803.8 1071.0,806.2 1071.4,805.9 1072.0,806.0 1073.0,805.5 1074.0,806.6 1074.5,805.0 1075.0,806.6 1076.0,810.2 1076.5,811.0 1077.0,809.7 1078.0,811.4 1079.0,809.3 1079.5,809.7 1080.0,808.8 1081.0,813.1 1082.0,810.6 1082.6,812.7 1083.0,810.9 1084.0,814.0 1085.0,811.5 1086.0,811.4 1087.0,810.1 1087.7,809.2 1088.0,807.0 1089.0,805.9 1090.0,801.8 1091.0,802.2 1091.3,799.3 1092.0,803.7 1093.0,806.8 1093.8,809.8 1094.0,810.5 1095.0,812.2 1096.0,812.8 1096.8,813.6 1097.0,813.3 1098.0,811.4 1099.0,808.0 1099.8,807.8 1100.0,808.5 1101.0,810.9 1102.0,813.2 1102.9,814.8 1103.0,814.6 1104.0,815.5 1105.0,815.1 1106.0,816.5 1107.0,815.8 1108.0,818.2 1109.0,820.2 1110.0,823.2 1111.0,824.9 1112.0,825.1 1113.0,822.2 1114.0,822.1 1114.1,822.0 1115.0,821.2 1116.0,818.5 1117.0,815.2 1117.1,815.7 1118.0,819.1 1119.0,817.6 1120.0,819.7 1120.2,819.7 1121.0,820.0 1122.0,816.3 1123.0,818.1 1124.0,815.7 1124.2,814.4 1125.0,812.1 1126.0,813.9 1127.0,813.6 1128.0,813.6 1128.3,812.6 1129.0,814.0 1130.0,813.4 1131.0,813.4 1132.0,811.4 1132.3,812.8 1133.0,816.9 1133.4,820.6 1134.0,818.6 1135.0,814.8 1135.4,813.8 1136.0,813.6 1137.0,810.1 1138.0,808.9 1139.0,810.2 1140.0,813.3 1140.5,814.0 1141.0,815.0 1142.0,813.0 1143.0,815.5 1143.5,816.0 1144.0,815.7 1145.0,814.3 1146.0,812.5 1147.0,810.3 1147.6,810.6 1148.0,811.2 1149.0,813.1 1150.0,814.8 1150.6,814.8 1151.0,814.2 1152.0,819.3 1153.0,822.7 1153.7,824.7 1154.0,825.3 1154.7,825.8 1155.0,825.1 1156.0,821.5 1157.0,815.7 1157.7,813.3 1158.0,814.1 1159.0,816.4 1160.0,817.3 1160.8,817.9 1161.0,818.3 1162.0,821.2 1163.0,821.3 1163.8,826.2 1164.0,825.7 1165.0,824.0 1166.0,823.9 1167.0,824.5 1167.9,822.8 1168.0,823.2 1169.0,826.9 1169.9,831.8 1170.0,832.0 1171.0,833.3 1172.0,834.9"/>
<polyline fill="none" stroke="#ff0000" stroke-width="1" stroke-linejoin="miter" points="398.0,718.2 399.0,717.9 400.0,718.3 401.0,714.8 402.0,715.0 403.0,718.3 403.1,716.7 404.0,714.3 405.0,711.7 406.0,711.4 407.0,708.0 408.0,708.3 408.2,706.6 409.0,711.7 409.2,712.1 410.0,713.0 411.0,712.7 412.0,718.0 413.0,711.4 414.0,715.4 415.0,711.3 415.3,715.4 416.0,717.5 417.0,717.7 418.0,721.7 419.0,726.7 419.4,724.2 420.0,724.8 421.0,721.1 422.0,721.5 423.0,721.5 424.0,724.3 425.0,727.7 425.1,727.0 426.0,715.8 427.0,705.9 427.1,706.9 428.0,713.3 429.0,713.9 429.5,714.5 430.0,709.4 431.0,705.7 431.2,704.5 432.0,706.8 433.0,705.6 433.5,708.1 434.0,710.1 435.0,721.8 435.6,725.2 436.0,724.1 437.0,718.3 438.0,712.1 438.7,707.6 439.0,704.6 440.0,691.3 440.7,686.7 441.0,686.6 442.0,689.3 443.0,688.8 443.8,692.6 444.0,692.6 445.0,688.4 446.0,679.2 446.8,677.8 447.0,680.2 448.0,688.5 448.8,688.0 449.0,685.5 450.0,675.5 450.9,666.0 451.0,664.3 452.0,655.8 453.0,646.2 453.5,642.9 454.0,649.1 454.9,660.7 455.0,659.6 456.0,656.8 457.0,653.2 457.6,652.4 458.0,654.8 459.0,673.2 460.0,679.6 461.0,679.4 462.0,674.6 463.0,672.5 464.0,677.4 465.0,689.9 465.1,690.6 466.0,690.3 467.0,680.1 467.7,671.8 468.0,666.1 469.0,653.3 469.1,651.3 470.0,647.4 470.8,636.9 471.0,639.3 472.0,644.5 473.0,651.7 473.2,652.9 474.0,646.2 475.0,645.9 475.2,644.7 476.0,650.3 477.0,663.5 477.3,661.1 478.0,672.5 479.0,681.3 479.3,685.7 480.0,678.0 481.0,666.3 481.9,658.8 482.0,657.1 483.0,643.0 483.4,643.7 484.0,643.3 485.0,640.7 485.4,633.6 486.0,640.8 487.0,641.9 487.4,648.4 488.0,644.3 489.0,648.3 489.5,644.4 490.0,650.6 491.0,655.8 491.5,659.4 492.0,659.0 493.0,663.4 494.0,661.4 495.0,671.8 496.0,682.7 496.2,685.3 497.0,677.9 497.6,677.8 498.0,676.9 499.0,688.1 500.0,677.8 501.0,675.4 501.6,670.9 502.0,672.2 503.0,663.8 503.7,662.4 504.0,659.0 505.0,660.8 506.0,644.8 506.7,643.7 507.0,642.5 508.0,643.1 509.0,629.6 509.8,626.6 510.0,625.3 511.0,625.0 512.0,616.5 512.8,616.3 513.0,615.0 514.0,605.3 514.8,594.3 515.0,591.1 515.9,572.0 516.0,572.0 517.0,564.6 518.0,566.3 518.5,561.3 519.0,569.9 519.9,576.6 520.0,576.4 521.0,573.2 522.0,571.5 523.0,578.0 524.0,586.6 525.0,587.3 526.0,595.8 527.0,600.8 528.0,598.8 529.0,593.4 530.0,596.3 531.0,601.4 532.0,609.1 533.0,616.1 533.1,615.3 534.0,607.3 535.0,601.4 535.2,599.9 536.0,599.6 537.0,592.3 538.0,591.0 539.0,590.0 539.2,590.5 540.0,587.8 541.0,581.0 542.0,576.3 542.3,572.0 543.0,571.1 544.0,570.6 545.0,559.2 545.3,561.9 546.0,557.8 547.0,559.5 548.0,558.9 548.4,558.6 549.0,553.4 550.0,565.3 551.0,567.0 551.4,570.5 552.0,567.1 553.0,572.6 554.0,572.7 554.5,571.9 555.0,575.5 556.0,585.4 557.0,590.9 557.5,594.3 558.0,591.6 559.0,588.2 560.0,581.1 560.6,580.5 561.0,579.8 562.0,580.3 563.0,577.1 563.5,578.2 564.0,575.4 565.0,591.6 565.6,595.3 566.0,597.9 567.0,588.6 568.0,587.7 569.0,580.1 569.7,577.1 570.0,575.1 571.0,584.3 572.0,583.0 572.7,588.2 573.0,590.5 574.0,594.4 575.0,592.7 575.8,598.4 576.0,599.3 577.0,607.8 578.0,604.5 578.8,610.2 579.0,618.0 579.8,644.0 580.0,645.4 581.0,653.1 581.5,653.4 582.0,651.8 583.0,646.4 583.9,646.6 584.0,645.5 585.0,634.6 585.3,626.2 586.0,632.6 587.0,642.0 587.6,646.0 588.0,644.0 589.0,641.6 590.0,640.1 591.0,633.9 592.0,627.4 593.0,618.2 593.7,608.0 594.0,608.9 595.0,608.5 596.0,610.1 597.0,605.0 597.1,604.5 598.0,598.6 599.0,592.9 599.1,592.5 600.0,587.2 601.0,578.5 602.0,572.0 602.2,571.0 603.0,575.2 604.0,575.2 605.0,578.9 605.2,578.0 606.0,580.6 607.0,580.9 608.0,589.3 608.3,588.5 609.0,587.5 610.0,576.8 611.0,575.1 611.3,571.5 612.0,570.2 613.0,566.7 614.0,563.2 614.4,562.4 615.0,569.6 616.0,564.3 617.0,561.3 617.4,559.2 618.0,559.6 619.0,562.2 620.0,563.8 620.5,563.0 621.0,566.3 622.0,563.8 623.0,571.3 623.5,569.6 624.0,567.0 625.0,562.3 626.0,558.1 626.6,556.6 627.0,559.8 628.0,563.6 629.0,574.8 629.6,576.6 630.0,577.9 631.0,572.4 632.0,570.7 632.7,567.9 633.0,572.6 634.0,570.9 635.0,580.8 635.7,586.3 636.0,586.0 637.0,582.8 638.0,587.9 639.0,583.3 639.8,588.4 640.0,589.1 641.0,597.8 642.0,594.6 643.0,599.8 643.8,596.3 644.0,596.9 645.0,594.8 646.0,600.8 647.0,597.7 647.9,603.5 648.0,603.2 649.0,610.2 649.9,616.1 650.0,615.6 651.0,612.7 652.0,614.1 652.6,614.7 653.0,605.3 654.0,587.7 655.0,587.1 656.0,580.7 657.0,580.7 658.0,578.0 659.0,580.7 659.5,579.0 660.0,572.7 660.9,549.2 661.0,549.3 662.0,545.5 663.0,548.5 664.0,542.2 665.0,543.8 666.0,546.4 667.0,552.9 668.0,548.2 669.0,539.7 670.0,531.1 670.1,528.2 671.0,534.1 672.0,544.3 672.1,544.0 673.0,537.3 674.0,524.4 675.0,517.1 675.2,515.4 676.0,517.3 677.0,526.6 678.0,531.5 678.2,532.8 679.0,531.7 680.0,524.3 681.0,529.3 681.3,522.8 682.0,524.2 683.0,515.4 684.0,510.7 684.3,507.1 685.0,513.7 686.0,514.0 687.0,516.5 687.3,516.2 688.0,518.2 689.0,510.0 690.0,505.6 690.4,502.7 691.0,503.5 692.0,493.6 693.0,493.8 693.4,490.2 694.0,487.2 695.0,481.6 695.5,480.9 696.0,483.5 697.0,489.3 697.5,487.8 698.0,486.6 699.0,474.5 700.0,478.1 700.5,475.1 701.0,483.6 702.0,483.7 702.6,486.1 703.0,482.7 704.0,485.4 705.0,485.0 705.6,482.3 706.0,481.6 707.0,487.9 707.7,493.4 708.0,496.5 709.0,497.2 710.0,504.1 711.0,502.0 711.7,508.3 712.0,504.9 713.0,507.3 714.0,498.1 714.8,497.4 715.0,498.1 716.0,500.6 717.0,501.3 717.8,500.7 718.0,500.5 719.0,498.7 720.0,502.7 720.9,508.0 721.0,507.4 722.0,503.8 723.0,501.4 723.9,499.0 724.0,498.9 725.0,498.8 726.0,492.0 727.0,492.2 728.0,494.4 729.0,494.7 730.0,494.8 731.0,493.8 732.0,501.4 733.0,506.9 734.0,515.9 734.1,516.4 735.0,511.2 736.0,509.0 737.0,503.2 737.1,501.4 738.0,495.1 739.0,496.4 740.0,490.2 741.0,493.2 741.2,493.7 742.0,495.9 743.0,490.3 744.0,492.3 745.0,490.7 745.2,489.2 746.0,496.9 747.0,503.5 747.3,501.7 748.0,500.2 749.0,501.6 750.0,504.0 750.3,507.4 751.0,507.0 752.0,496.0 753.0,495.5 753.4,494.5 754.0,494.2 755.0,484.7 755.4,488.2 756.0,487.3 757.0,490.0 758.0,479.2 758.4,483.8 759.0,487.1 760.0,496.3 760.5,497.2 761.0,503.1 762.0,495.4 762.5,501.3 763.0,507.5 763.5,520.6 764.0,526.1 764.9,534.0 765.0,532.9 766.0,530.1 767.0,521.3 767.6,522.1 768.0,521.6 769.0,524.9 769.6,518.5 770.0,522.5 771.0,524.7 772.0,532.9 772.7,534.0 773.0,535.1 774.0,536.1 775.0,544.7 775.7,543.1 776.0,544.5 777.0,552.5 777.7,561.3 778.0,561.3 779.0,555.2 779.8,547.3 780.0,547.8 781.0,552.7 782.0,560.1 783.0,559.6 784.0,566.2 785.0,566.6 786.0,581.2 786.6,585.9 787.0,586.9 788.0,573.3 788.7,576.5 789.0,572.3 790.0,590.7 790.5,596.4 791.0,594.1 792.0,586.4 793.0,581.1 793.1,581.5 794.0,580.6 795.0,573.0 796.0,572.7 796.2,571.6 797.0,568.5 798.0,564.2 798.2,564.8 799.0,569.6 800.0,577.7 800.8,580.4 801.0,577.4 802.0,564.9 803.0,552.9 803.3,549.0 804.0,555.9 805.0,555.3 805.3,562.2 806.0,571.9 806.9,584.4 807.0,584.9 808.0,591.0 809.0,591.8 809.4,594.8 810.0,586.5 811.0,584.1 811.4,580.1 812.0,579.7 813.0,569.1 813.8,567.9 814.0,567.8 815.0,565.9 816.0,559.8 817.0,564.3 817.5,561.6 818.0,565.1 819.0,562.4 820.0,564.0 820.6,565.1 821.0,564.7 822.0,566.5 823.0,570.0 823.6,571.1 824.0,575.7 825.0,579.8 825.2,580.7 826.0,573.5 827.0,566.7 827.7,563.8 828.0,565.5 829.0,572.5 830.0,583.9 830.1,585.5 831.0,590.4 832.0,594.6 832.7,596.9 833.0,595.6 834.0,605.9 835.0,607.0 835.8,610.6 836.0,610.9 837.0,616.8 838.0,612.1 838.8,619.3 839.0,617.8 840.0,609.3 840.9,605.7 841.0,606.0 842.0,601.9 843.0,598.8 843.9,593.7 844.0,594.1 845.0,594.4 845.9,597.1 846.0,599.7 847.0,617.5 848.0,617.2 849.0,624.3 850.0,623.9 851.0,616.5 851.5,614.0 852.0,617.4 853.0,621.3 854.0,629.5 854.1,631.2 855.0,620.0 856.0,610.7 856.1,611.3 857.0,603.8 857.7,596.6 858.0,594.7 859.0,601.0 860.0,608.2 860.2,608.9 861.0,602.5 861.2,600.3 862.0,606.7 863.0,614.2 863.2,616.2 864.0,616.0 865.0,620.7 866.0,625.8 866.3,624.3 867.0,628.4 868.0,628.8 869.0,637.4 869.3,633.7 870.0,636.0 871.0,629.9 871.3,630.6 872.0,624.3 873.0,617.5 873.4,615.8 874.0,614.3 875.0,610.3 876.0,613.4 876.4,608.5 877.0,609.9 878.0,604.2 879.0,612.3 879.5,610.4 880.0,610.9 881.0,602.5 881.5,603.9 882.0,606.3 883.0,620.4 883.5,622.0 884.0,626.0 885.0,619.0 886.0,619.0 887.0,606.5 887.6,597.8 888.0,598.3 889.0,598.6 890.0,598.5 890.2,599.5 891.0,596.2 892.0,592.7 892.2,591.1 893.0,586.3 894.0,583.5 894.7,581.1 895.0,578.7 896.0,582.6 896.8,581.3 897.0,581.9 898.0,580.8 899.0,587.2 899.8,588.8 900.0,585.3 900.8,574.5 901.0,573.8 902.0,568.3 902.3,566.6 903.0,565.7 904.0,570.1 904.9,573.1 905.0,570.1 905.6,556.6 906.0,552.0 906.6,549.3 907.0,557.8 907.2,563.6 908.0,564.6 908.9,565.1 909.0,566.3 909.5,570.4 910.0,607.7 911.0,597.8 911.5,594.7 912.0,589.5 913.0,591.1 914.0,575.5 914.3,576.4 915.0,585.8 916.0,586.8 916.6,585.4 917.0,588.6 917.6,590.2 918.0,597.7 918.4,601.6 919.0,608.7 920.0,612.4 921.0,614.2 922.0,613.9 923.0,618.5 924.0,617.9 925.0,613.8 926.0,608.1 927.0,609.4 927.5,609.9 928.0,606.2 928.8,589.1 929.0,590.2 930.0,594.3 930.3,595.6 931.0,583.6 931.3,583.5 932.0,580.4 932.8,577.9 933.0,575.9 933.8,563.3 934.0,562.8 935.0,571.4 935.7,570.4 936.0,568.0 936.9,559.2 937.0,555.6 937.7,538.3 938.0,540.3 938.9,534.6 939.0,534.5 940.0,530.8 940.4,529.7 940.9,536.6 941.0,537.5 942.0,532.0 942.5,532.6 943.0,530.7 944.0,534.7 945.0,526.6 945.8,519.7 946.0,520.9 947.0,528.2 948.0,530.4 948.3,531.8 949.0,523.2 949.1,522.1 950.0,519.8 951.0,520.4 951.6,519.4 952.0,522.5 953.0,524.6 953.1,523.8 954.0,529.7 954.1,529.6 955.0,534.7 955.4,540.3 956.0,525.0 956.7,516.3 957.0,512.4 958.0,513.6 958.7,512.8 959.0,518.0 959.7,528.8 960.0,531.8 960.7,540.6 961.0,546.6 962.0,543.2 962.3,544.6 962.8,534.8 963.0,536.8 964.0,543.9 964.3,544.6 965.0,534.5 965.3,534.9 966.0,527.6 966.8,528.3 967.0,527.6 968.0,533.4 968.9,532.0 969.0,534.4 969.4,544.0 970.0,552.2 970.4,554.4 970.9,543.7 971.0,543.8 972.0,546.9 972.9,543.0 973.0,542.2 974.0,536.4 974.5,533.8 975.0,542.8 975.5,552.8 976.0,552.9 976.5,552.9 977.0,549.1 978.0,548.3 979.0,535.1 980.0,532.5 980.6,530.5 981.0,532.2 982.0,536.0 982.1,536.6 983.0,527.2 983.1,525.1 984.0,522.3 985.0,526.4 985.1,526.3 986.0,515.1 986.1,515.1 987.0,518.6 988.0,521.1 988.2,521.7 989.0,517.3 989.7,517.2 990.0,511.2 991.0,506.4 991.5,507.6 992.0,513.6 992.7,512.7 993.0,517.3 994.0,513.4 994.3,518.7 995.0,519.1 995.8,513.5 996.0,508.5 996.3,502.9 997.0,498.2 998.0,495.8 998.3,497.1 999.0,495.0 1000.0,492.9 1000.2,492.3 1001.0,482.0 1002.0,473.7 1002.2,472.8 1003.0,474.4 1004.0,468.5 1005.0,468.8 1005.2,468.8 1006.0,468.1 1007.0,464.2 1008.0,462.1 1008.3,461.9 1009.0,462.0 1010.0,456.7 1011.0,460.8 1012.0,453.7 1012.3,451.6 1013.0,450.5 1014.0,461.8 1014.5,457.7 1015.0,457.9 1016.0,452.9 1016.8,448.2 1017.0,449.0 1018.0,451.8 1019.0,449.0 1019.5,456.1 1020.0,457.9 1021.0,462.0 1021.5,463.9 1022.0,469.9 1023.0,479.4 1023.1,481.9 1024.0,476.2 1025.0,476.1 1025.5,471.4 1026.0,472.8 1027.0,479.3 1028.0,488.0 1028.6,492.4 1029.0,491.6 1030.0,486.4 1031.0,485.8 1031.6,479.6 1032.0,479.2 1033.0,472.9 1034.0,478.3 1034.7,473.2 1035.0,474.5 1036.0,470.0 1037.0,479.8 1037.7,477.6 1038.0,478.4 1039.0,469.7 1040.0,465.9 1040.8,464.2 1041.0,464.5 1042.0,462.1 1043.0,470.0 1044.0,467.1 1044.8,469.1 1045.0,471.9 1046.0,482.4 1046.9,491.4 1047.0,492.1 1048.0,488.9 1049.0,489.5 1049.9,488.2 1050.0,488.3 1051.0,485.6 1052.0,488.4 1053.0,483.7 1054.0,485.6 1055.0,485.2 1056.0,491.4 1057.0,491.8 1058.0,495.1 1059.0,492.9 1059.1,492.9 1060.0,503.9 1061.0,516.9 1061.1,517.7 1062.0,528.2 1062.7,531.1 1063.0,530.0 1064.0,517.6 1065.0,514.9 1066.0,504.7 1066.2,502.4 1067.0,502.0 1068.0,510.9 1068.2,512.5 1069.0,520.1 1070.0,522.1 1071.0,535.1 1071.3,534.4 1072.0,535.6 1073.0,525.7 1073.3,521.0 1074.0,521.8 1075.0,525.9 1076.0,525.0 1076.3,527.6 1077.0,528.6 1078.0,528.8 1079.0,522.4 1079.4,523.0 1080.0,514.7 1081.0,513.2 1081.4,507.9 1082.0,509.8 1083.0,514.8 1083.4,517.3 1084.0,515.9 1085.0,520.2 1086.0,521.1 1086.5,524.9 1087.0,521.3 1088.0,516.2 1088.5,512.7 1089.0,513.0 1090.0,502.4 1091.0,507.7 1091.6,505.2 1092.0,507.3 1093.0,507.5 1094.0,518.7 1094.6,516.5 1095.0,517.7 1096.0,523.7 1097.0,532.5 1097.7,532.0 1098.0,532.4 1099.0,523.4 1100.0,522.4 1100.7,515.2 1101.0,513.6 1102.0,511.7 1102.7,508.3 1103.0,502.9 1104.0,498.9 1104.8,490.1 1105.0,488.4 1105.4,484.0 1106.0,483.9 1106.4,479.6 1107.0,477.9 1108.0,473.5 1108.4,472.6 1109.0,471.4 1109.9,480.3 1110.0,479.8 1111.0,479.7 1112.0,477.5 1112.5,470.4 1113.0,468.0 1114.0,463.7 1115.0,468.6 1115.5,471.6 1116.0,459.8 1116.5,447.9 1117.0,446.9 1118.0,443.9 1119.0,439.1 1119.1,439.3 1120.0,441.4 1120.6,448.2 1121.0,444.6 1122.0,445.0 1122.1,445.8 1123.0,454.0 1123.3,455.5 1124.0,449.9 1124.6,440.2 1125.0,446.7 1126.0,454.1 1126.4,462.6 1126.7,432.1 1127.0,432.3 1128.0,428.6 1128.7,424.3 1129.0,421.2 1130.0,414.8 1130.2,413.5 1131.0,414.9 1132.0,409.6 1132.3,415.1 1133.0,427.8 1133.3,433.6 1134.0,426.7 1134.3,422.0 1135.0,426.0 1135.8,436.3 1136.0,435.6 1137.0,429.3 1137.3,428.5 1138.0,428.7 1139.0,426.6 1139.4,428.7 1140.0,442.7 1140.4,444.9 1141.0,440.1 1141.9,441.8 1142.0,440.3 1142.9,427.9 1143.0,427.6 1144.0,423.9 1144.5,424.1 1145.0,418.7 1145.5,410.7 1146.0,415.7 1147.0,407.9 1147.5,408.9 1148.0,407.7 1149.0,413.4 1149.5,423.6 1150.0,421.8 1151.0,418.8 1151.6,419.4 1152.0,419.7 1153.0,420.0 1154.0,420.2 1154.1,421.1 1154.6,432.1 1155.0,437.5 1155.6,445.6 1156.0,448.1 1157.0,437.7 1157.2,437.4 1158.0,436.8 1159.0,438.3 1159.2,438.6 1160.0,429.0 1160.2,426.3 1161.0,422.5 1162.0,419.5 1162.2,419.7 1163.0,428.9 1163.2,431.1 1164.0,439.0 1165.0,444.0 1165.3,445.6 1165.8,427.0 1166.0,423.6 1166.8,415.0 1167.0,415.9 1168.0,416.1 1169.0,413.2 1169.3,415.0 1170.0,415.0 1170.4,425.4 1171.0,428.4 1171.9,433.2"/>
<polyline fill="none" stroke="#0000ff" stroke-width="1" stroke-linejoin="miter" points="398.0,718.7 399.0,717.6 400.0,711.3 401.0,715.4 402.0,706.4 403.0,707.5 403.1,706.3 404.0,704.6 405.0,696.9 406.0,698.1 407.0,691.5 407.2,690.2 408.0,683.7 409.0,682.8 409.2,682.5 410.0,682.4 411.0,677.5 412.0,678.7 413.0,677.1 413.3,677.7 414.0,672.5 415.0,673.1 416.0,670.7 416.3,670.6 417.0,671.9 418.0,673.4 419.0,675.1 419.4,675.5 420.0,675.7 421.0,677.8 422.0,673.8 422.5,677.8 423.0,674.0 424.0,678.6 425.0,671.7 425.5,670.0 426.0,664.6 427.0,669.6 427.5,665.6 428.0,661.4 429.0,650.7 429.1,648.8 429.9,634.1 430.0,634.3 431.0,636.2 432.0,636.0 433.0,632.7 434.0,628.2 435.0,636.2 435.6,640.9 436.0,636.8 437.0,636.1 437.3,629.8 438.0,627.6 438.7,617.3 439.0,612.2 440.0,589.2 440.1,586.8 441.0,579.3 441.7,578.2 442.0,580.3 443.0,582.5 444.0,583.7 444.3,585.5 444.8,593.6 445.0,591.6 446.0,586.0 447.0,582.0 447.4,576.1 448.0,578.9 449.0,586.9 449.5,590.1 450.0,583.4 451.0,578.6 451.5,570.4 452.0,562.2 453.0,546.2 453.2,542.6 454.0,547.7 455.0,556.8 455.6,556.1 456.0,554.5 457.0,551.3 457.7,547.6 458.0,548.9 459.0,563.8 459.7,564.4 460.0,560.2 461.0,548.9 461.8,547.2 462.0,547.7 463.0,553.9 464.0,557.6 464.9,565.5 465.0,562.4 466.0,545.9 466.9,518.9 467.0,521.9 467.9,537.2 468.0,536.3 469.0,516.4 470.0,502.1 471.0,477.7 472.0,472.8 473.0,469.1 474.0,472.0 475.0,483.5 475.1,485.8 476.0,476.1 477.0,461.8 477.2,458.6 478.0,478.0 479.0,499.8 479.2,504.3 480.0,496.0 481.0,488.7 481.3,482.4 482.0,480.5 483.0,469.3 483.9,464.5 484.0,464.8 485.0,472.0 486.0,476.1 486.4,480.7 487.0,483.3 488.0,490.5 489.0,486.4 490.0,492.4 490.5,494.0 491.0,498.3 492.0,502.1 492.5,506.4 493.0,500.3 494.0,500.3 495.0,509.0 496.0,528.0 497.0,525.0 498.0,524.2 498.7,523.2 499.0,525.0 499.7,534.1 500.0,533.9 501.0,519.5 501.8,507.6 502.0,505.5 503.0,504.8 504.0,501.2 504.8,499.2 505.0,497.8 506.0,495.2 507.0,485.2 508.0,483.5 509.0,478.7 510.0,486.8 511.0,489.0 512.0,483.9 513.0,478.8 514.0,468.1 515.0,449.9 515.1,447.6 516.0,433.3 516.5,428.0 517.0,430.3 518.0,441.7 518.2,443.9 519.0,433.2 519.2,430.6 520.0,433.9 521.0,434.5 521.3,437.8 522.0,438.0 523.0,447.4 523.3,451.0 524.0,458.4 525.0,462.3 526.0,469.1 526.4,466.4 527.0,464.4 528.0,457.1 529.0,452.3 529.5,446.1 530.0,453.0 531.0,455.1 532.0,464.5 532.5,465.1 533.0,471.5 534.0,456.4 535.0,456.8 536.0,457.5 536.6,457.1 537.0,453.2 538.0,443.7 538.7,434.9 539.0,438.7 540.0,439.5 540.7,449.6 541.0,446.6 542.0,442.3 543.0,435.9 544.0,428.0 544.8,426.1 545.0,427.6 546.0,430.8 546.9,440.4 547.0,440.8 548.0,430.7 548.3,427.1 549.0,429.3 550.0,432.1 551.0,437.3 552.0,435.6 553.0,445.9 554.0,447.3 554.1,445.7 555.0,451.3 556.0,460.6 556.1,461.6 557.0,462.9 558.0,464.3 559.0,465.5 559.2,466.1 560.0,472.5 561.0,478.0 561.2,479.8 562.0,472.5 563.0,479.5 563.3,477.3 564.0,490.1 564.3,492.4 565.0,496.4 566.0,498.5 567.0,507.1 567.4,506.4 568.0,505.7 569.0,499.4 570.0,496.1 570.5,494.1 571.0,495.4 572.0,495.2 572.5,497.3 573.0,496.0 574.0,493.3 575.0,488.4 575.2,486.6 576.0,490.1 577.0,494.3 577.6,496.3 578.0,497.1 579.0,499.5 579.7,508.6 580.0,520.7 580.7,543.7 581.0,540.1 582.0,543.5 583.0,535.2 583.8,535.5 584.0,532.6 584.8,518.0 585.0,519.2 586.0,525.6 586.8,523.2 587.0,525.8 588.0,538.7 588.5,546.7 589.0,539.0 590.0,548.8 591.0,546.1 592.0,543.9 593.0,533.0 594.0,521.3 594.1,520.0 595.0,517.4 596.0,513.5 597.0,511.5 597.1,511.2 598.0,508.4 599.0,502.4 600.0,503.4 601.0,497.5 602.0,492.8 603.0,504.5 604.0,510.4 605.0,505.6 606.0,516.8 607.0,517.0 607.1,518.2 608.0,519.4 609.0,524.2 609.1,524.6 610.0,522.6 611.0,516.2 612.0,519.2 612.2,519.6 613.0,521.1 614.0,512.6 615.0,518.0 616.0,512.6 617.0,513.3 618.0,508.4 619.0,509.9 620.0,506.0 621.0,507.8 621.3,502.9 622.0,504.8 623.0,508.2 624.0,511.7 625.0,515.9 625.4,518.4 626.0,518.1 627.0,517.6 628.0,515.7 629.0,520.7 630.0,516.5 630.5,517.0 631.0,511.7 632.0,510.5 633.0,504.2 634.0,508.8 635.0,501.4 635.5,500.3 636.0,497.5 637.0,499.8 638.0,497.6 639.0,500.5 639.6,496.8 640.0,499.7 641.0,499.9 642.0,507.7 642.7,504.0 643.0,506.0 644.0,498.6 645.0,505.6 646.0,495.3 646.7,499.1 647.0,503.0 648.0,509.1 649.0,512.2 649.8,518.4 650.0,517.0 651.0,513.7 652.0,505.7 652.8,503.2 653.0,500.6 654.0,496.6 654.8,483.7 655.0,484.4 656.0,475.2 657.0,479.4 657.9,478.8 658.0,478.3 659.0,469.9 660.0,461.9 661.0,452.4 662.0,454.1 663.0,449.9 664.0,458.0 665.0,457.0 666.0,462.0 667.0,455.4 668.0,456.2 669.0,451.4 670.0,457.6 671.0,459.3 672.0,466.3 672.1,467.2 673.0,465.8 674.0,454.2 675.0,453.1 676.0,443.2 676.2,441.4 677.0,446.0 678.0,452.2 679.0,454.6 679.2,455.0 680.0,448.9 681.0,448.7 682.0,441.5 682.3,445.3 683.0,440.8 684.0,440.1 685.0,433.9 686.0,436.8 686.3,434.6 687.0,437.6 688.0,434.1 689.0,445.9 689.4,441.6 690.0,441.2 691.0,433.5 692.0,431.6 692.4,427.1 693.0,421.8 694.0,415.0 694.5,413.6 695.0,408.5 696.0,408.4 696.1,407.9 697.0,417.0 698.0,417.9 698.5,423.7 699.0,421.0 700.0,422.6 700.5,419.4 701.0,423.3 702.0,424.8 703.0,425.5 703.6,433.4 704.0,438.8 705.0,425.0 705.6,422.7 706.0,420.6 707.0,427.7 708.0,423.1 708.7,429.3 709.0,430.2 710.0,440.0 710.7,442.6 711.0,445.8 712.0,442.0 713.0,443.6 713.8,447.7 714.0,449.1 715.0,454.7 715.8,461.7 716.0,462.7 717.0,465.2 718.0,466.5 718.8,471.0 719.0,471.6 720.0,479.4 721.0,473.7 721.9,481.4 722.0,481.0 723.0,478.1 723.9,468.8 724.0,469.7 725.0,465.5 726.0,473.5 727.0,467.2 728.0,468.8 729.0,466.7 730.0,474.4 731.0,473.3 732.0,484.6 733.0,483.1 733.7,484.4 734.0,480.4 735.0,481.6 736.0,471.8 737.0,468.2 737.1,467.9 738.0,468.3 739.0,465.4 740.0,465.8 740.2,466.1 741.0,466.1 742.0,461.9 743.0,464.8 744.0,462.0 744.2,462.3 745.0,465.9 746.0,475.7 747.0,478.5 747.3,481.7 748.0,480.9 749.0,480.5 750.0,480.0 750.3,482.9 751.0,471.9 752.0,466.3 752.3,461.5 753.0,463.2 754.0,468.3 754.4,470.1 755.0,463.8 756.0,460.2 756.4,456.1 757.0,455.8 758.0,447.5 759.0,446.7 759.5,441.0 760.0,441.3 761.0,433.3 762.0,432.6 762.1,432.9 763.0,445.6 763.5,451.8 764.0,460.9 764.9,467.5 765.0,468.7 766.0,460.5 767.0,461.8 767.6,457.7 768.0,455.7 769.0,451.7 770.0,449.5 771.0,445.4 771.6,448.0 772.0,443.9 773.0,450.9 774.0,450.0 774.7,451.3 775.0,450.2 776.0,460.1 776.7,461.2 777.0,465.0 778.0,469.7 778.7,478.4 779.0,478.0 780.0,471.8 781.0,480.0 781.8,484.2 782.0,484.0 783.0,486.3 784.0,487.2 784.8,491.3 785.0,492.8 786.0,505.4 786.9,513.6 787.0,511.8 788.0,500.8 788.9,492.1 789.0,493.6 790.0,516.0 790.5,521.6 791.0,512.9 792.0,487.8 793.0,487.2 794.0,485.8 795.0,489.4 796.0,485.4 797.0,474.2 798.0,479.7 799.0,492.4 800.0,501.5 800.1,501.6 801.0,519.8 801.1,519.6 802.0,504.2 803.0,491.3 803.1,489.2 804.0,495.4 805.0,500.7 805.2,501.7 806.0,502.5 807.0,510.6 808.0,514.0 808.8,520.0 809.0,518.0 810.0,513.4 811.0,504.9 811.3,505.3 812.0,502.3 813.0,501.8 814.0,496.4 814.3,503.7 815.0,498.5 816.0,499.5 817.0,490.6 817.3,491.7 818.0,490.8 819.0,493.3 820.0,485.2 821.0,486.4 821.4,487.2 822.0,491.7 823.0,490.7 824.0,491.2 825.0,493.3 826.0,498.0 826.5,502.5 827.0,493.8 827.5,478.9 828.0,480.4 829.0,483.0 830.0,487.5 830.5,484.4 831.0,486.7 832.0,486.3 833.0,499.5 833.6,502.2 834.0,503.2 835.0,503.6 836.0,507.1 836.6,509.9 837.0,513.1 838.0,510.5 839.0,515.3 839.7,514.7 840.0,514.0 841.0,502.5 841.7,498.8 842.0,497.3 843.0,495.3 844.0,488.3 845.0,487.0 845.8,484.7 846.0,486.0 847.0,486.4 848.0,498.6 848.8,501.9 849.0,503.0 850.0,498.0 851.0,496.4 851.9,491.6 852.0,493.1 853.0,499.3 853.9,509.6 854.0,508.6 855.0,499.4 855.9,481.7 856.0,482.7 857.0,477.4 858.0,487.4 859.0,484.2 860.0,487.9 861.0,488.1 862.0,491.2 863.0,492.4 864.0,494.9 865.0,496.3 866.0,498.9 867.0,500.2 868.0,505.1 868.1,505.7 869.0,506.9 870.0,495.1 871.0,497.1 872.0,496.1 873.0,499.6 874.0,493.3 875.0,492.9 875.2,492.8 876.0,491.9 877.0,486.7 878.0,486.0 879.0,480.4 880.0,479.8 880.3,478.7 881.0,481.2 882.0,484.2 883.0,486.9 884.0,488.1 884.4,489.0 885.0,483.5 886.0,478.0 887.0,466.2 888.0,465.7 888.4,460.1 889.0,459.7 890.0,458.2 891.0,457.9 891.5,459.2 892.0,468.5 893.0,448.0 894.0,450.5 895.0,443.9 896.0,448.2 897.0,440.4 897.6,439.0 898.0,437.2 899.0,432.5 900.0,426.4 901.0,426.1 902.0,420.7 902.7,418.9 903.0,415.8 904.0,409.9 905.0,399.6 906.0,395.4 906.7,389.1 907.0,390.1 908.0,390.7 908.8,399.0 909.0,404.3 910.0,426.4 910.4,435.9 911.0,433.2 912.0,419.4 913.0,424.2 914.0,413.3 914.4,411.5 915.0,413.3 916.0,424.4 916.9,431.0 917.0,432.0 918.0,433.7 919.0,445.2 919.9,447.8 920.0,448.2 921.0,448.9 922.0,461.2 923.0,454.8 924.0,455.7 925.0,459.0 926.0,464.2 927.0,453.5 928.0,452.0 929.0,443.7 930.0,439.2 930.1,439.4 931.0,435.9 932.0,423.7 933.0,418.2 934.0,410.0 934.1,409.4 935.0,400.5 936.0,403.4 937.0,390.5 938.0,388.6 938.2,386.7 939.0,383.1 940.0,380.5 941.0,384.9 941.3,381.1 942.0,378.8 943.0,374.3 944.0,376.4 945.0,365.3 945.3,366.8 946.0,362.9 947.0,362.1 948.0,355.7 948.4,354.7 949.0,352.1 950.0,349.1 950.4,349.6 951.0,350.1 952.0,349.5 953.0,351.7 954.0,350.0 954.5,351.6 955.0,343.4 955.9,342.6 956.0,343.7 957.0,343.7 958.0,342.0 959.0,341.5 959.5,341.0 960.0,342.8 961.0,359.6 961.2,363.2 962.0,354.8 963.0,353.5 963.6,351.6 964.0,354.5 965.0,342.4 966.0,344.4 967.0,334.1 968.0,339.2 969.0,345.6 970.0,355.1 970.3,356.3 971.0,356.0 972.0,347.9 972.7,343.4 973.0,345.5 974.0,350.8 975.0,347.5 975.8,349.2 976.0,348.6 977.0,344.5 978.0,334.4 978.2,333.1 979.0,332.7 980.0,336.4 980.5,333.7 981.0,332.8 982.0,326.8 982.8,325.0 983.0,324.6 984.0,325.2 985.0,317.8 985.9,317.5 986.0,317.6 987.0,319.8 988.0,320.1 989.0,320.8 989.5,316.3 990.0,309.2 990.9,305.2 991.0,305.0 992.0,305.1 993.0,309.2 994.0,310.7 994.6,312.4 995.0,302.0 996.0,291.7 997.0,292.7 998.0,297.6 999.0,288.5 1000.0,285.9 1000.1,284.7 1001.0,272.5 1001.5,262.0 1002.0,267.0 1003.0,270.2 1004.0,273.9 1004.1,275.1 1005.0,267.8 1006.0,250.4 1006.2,248.6 1007.0,248.2 1008.0,251.5 1009.0,247.6 1009.2,245.9 1010.0,241.1 1011.0,239.6 1011.3,235.8 1012.0,236.5 1013.0,238.5 1014.0,244.7 1014.3,244.0 1015.0,234.7 1015.3,229.6 1016.0,230.8 1017.0,226.9 1017.8,224.5 1018.0,222.5 1019.0,218.6 1020.0,215.4 1021.0,221.0 1022.0,218.9 1022.4,225.7 1023.0,233.4 1023.4,243.0 1024.0,239.7 1025.0,237.8 1025.9,235.3 1026.0,236.3 1027.0,243.6 1028.0,251.8 1028.1,252.7 1029.0,248.5 1030.0,243.5 1030.5,243.0 1031.0,239.4 1032.0,240.4 1033.0,235.0 1034.0,233.8 1034.2,233.3 1035.0,260.4 1035.2,265.6 1036.0,256.3 1036.6,248.1 1037.0,246.5 1038.0,246.0 1039.0,246.6 1040.0,247.8 1040.7,246.9 1041.0,242.3 1042.0,239.5 1043.0,234.8 1043.8,231.2 1044.0,233.1 1045.0,242.9 1045.8,252.0 1046.0,253.6 1047.0,255.3 1047.8,261.9 1048.0,260.1 1049.0,255.1 1049.8,245.7 1050.0,245.5 1051.0,240.2 1051.5,239.2 1052.0,248.0 1052.9,262.9 1053.0,262.7 1054.0,264.8 1054.5,268.1 1055.0,265.9 1056.0,252.0 1057.0,246.6 1058.0,243.4 1059.0,245.0 1060.0,241.6 1061.0,263.7 1061.6,271.1 1062.0,276.0 1063.0,277.6 1063.5,283.3 1064.0,274.9 1065.0,264.2 1065.1,263.2 1066.0,262.2 1067.0,258.7 1067.5,263.4 1068.0,269.8 1069.0,281.5 1069.1,283.1 1070.0,290.5 1071.0,293.5 1071.8,298.8 1072.0,297.9 1073.0,288.6 1073.2,287.8 1074.0,286.9 1075.0,279.8 1076.0,289.4 1076.3,285.9 1077.0,281.5 1077.9,273.9 1078.0,274.1 1079.0,257.7 1080.0,251.0 1080.3,243.0 1081.0,253.7 1081.3,258.1 1082.0,264.9 1083.0,263.5 1084.0,275.5 1084.4,273.7 1085.0,272.1 1086.0,271.1 1087.0,272.3 1087.4,269.6 1088.0,265.3 1089.0,259.9 1089.5,259.4 1090.0,259.5 1091.0,258.8 1092.0,257.8 1092.1,257.0 1093.0,260.9 1094.0,269.4 1094.5,269.8 1095.0,266.9 1096.0,262.1 1097.0,273.0 1098.0,279.7 1099.0,273.5 1099.6,264.3 1100.0,263.3 1101.0,270.2 1101.5,270.5 1102.0,258.9 1102.7,252.2 1103.0,248.7 1104.0,239.3 1104.3,232.3 1105.0,225.6 1105.7,218.0 1106.0,220.6 1107.0,214.8 1108.0,217.1 1108.3,213.4 1109.0,208.3 1109.4,204.3 1110.0,205.2 1111.0,206.7 1111.8,208.2 1112.0,205.0 1113.0,192.0 1113.2,189.3 1114.0,191.3 1115.0,181.7 1115.9,183.8 1116.0,182.7 1116.9,173.7 1117.0,171.9 1118.0,171.6 1118.5,168.4 1119.0,175.4 1119.9,184.0 1120.0,183.5 1121.0,186.2 1122.0,189.8 1123.0,191.1 1124.0,199.0 1125.0,188.7 1126.0,201.0 1126.4,203.9 1127.0,173.4 1128.0,168.3 1129.0,166.7 1130.0,160.0 1130.1,159.9 1131.0,162.7 1132.0,165.1 1132.1,165.8 1133.0,171.3 1134.0,173.4 1134.1,174.1 1135.0,171.5 1136.0,175.8 1137.0,179.1 1137.2,180.5 1138.0,180.4 1139.0,186.0 1140.0,186.1 1140.8,189.6 1141.0,188.5 1142.0,182.6 1142.9,171.2 1143.0,170.8 1144.0,167.7 1145.0,171.2 1145.3,167.0 1146.0,160.7 1147.0,148.4 1147.3,148.4 1148.0,151.7 1148.4,156.8 1149.0,158.4 1150.0,167.3 1150.4,165.7 1151.0,165.7 1151.4,156.9 1152.0,160.3 1153.0,158.9 1154.0,158.3 1155.0,172.6 1155.5,181.9 1156.0,182.7 1157.0,188.0 1157.9,185.5 1158.0,184.5 1159.0,171.6 1159.5,170.7 1160.0,165.3 1161.0,167.5 1161.6,163.8 1162.0,174.8 1162.6,178.3 1163.0,182.7 1164.0,169.8 1165.0,167.6 1165.2,166.5 1166.0,155.7 1166.6,144.5 1167.0,144.9 1168.0,140.3 1169.0,145.6 1169.7,144.7 1170.0,148.6 1170.7,149.4 1171.0,147.6 1172.0,139.0 1172.1,139.3"/>
<path fill="#006400" stroke="none" d="M398 716v4h1v-4zM399 716v4h1v-4zM400 716v4h1v-4zM401 714v7h1v-7zM402 714v5h1v-5zM403 714v5h1v-5zM404 708v10h1v-10zM405 701v13h1v-13zM406 692v15h1v-15zM407 690v8h1v-8zM408 693v7h1v-7zM409 692v10h1v-10zM410 692v8h1v-8zM411 693v10h1v-10zM412 692v8h1v-8zM413 690v8h1v-8zM414 686v14h1v-14zM415 688v9h1v-9zM416 688v12h1v-12zM417 690v13h1v-13zM418 694v9h1v-9zM419 696v9h1v-9zM420 700v5h1v-5zM421 696v7h1v-7zM422 697v6h1v-6zM423 695v6h1v-6zM424 690v9h1v-9zM425 682v13h1v-13zM426 678v9h1v-9zM427 672v9h1v-9zM428 662v16h1v-16zM429 653v14h1v-14zM430 651v6h1v-6zM431 653v4h1v-4zM432 650v9h1v-9zM433 653v9h1v-9zM434 657v9h1v-9zM435 661v9h1v-9zM436 648v19h1v-19zM437 637v21h1v-21zM438 626v18h1v-18zM439 610v22h1v-22zM440 604v16h1v-16zM441 605v12h1v-12zM442 611v9h1v-9zM443 615v8h1v-8zM444 615v10h1v-10zM445 613v6h1v-6zM446 612v5h1v-5zM447 610v10h1v-10zM448 615v8h1v-8zM449 604v18h1v-18zM450 597v14h1v-14zM451 577v24h1v-24zM452 568v13h1v-13zM453 571v6h1v-6zM454 571v10h1v-10zM455 571v7h1v-7zM456 566v10h1v-10zM457 565v20h1v-20zM458 578v16h1v-16zM459 589v11h1v-11zM460 595v13h1v-13zM461 596v10h1v-10zM462 596v6h1v-6zM463 595v13h1v-13zM464 604v14h1v-14zM465 603v14h1v-14zM466 589v18h1v-18zM467 579v15h1v-15zM468 571v14h1v-14zM469 554v22h1v-22zM470 544v14h1v-14zM471 547v10h1v-10zM472 550v13h1v-13zM473 553v10h1v-10zM474 545v13h1v-13zM475 538v14h1v-14zM476 536v20h1v-20zM477 549v25h1v-25zM478 563v19h1v-19zM479 563v21h1v-21zM480 556v15h1v-15zM481 549v14h1v-14zM482 543v16h1v-16zM483 545v8h1v-8zM484 547v15h1v-15zM485 553v16h1v-16zM486 562v9h1v-9zM487 565v13h1v-13zM488 572v10h1v-10zM489 576v12h1v-12zM490 579v11h1v-11zM491 583v11h1v-11zM492 588v12h1v-12zM493 593v18h1v-18zM494 603v18h1v-18zM495 616v9h1v-9zM496 620v8h1v-8zM497 620v10h1v-10zM498 622v8h1v-8zM499 612v16h1v-16zM500 608v13h1v-13zM501 599v12h1v-12zM502 595v11h1v-11zM503 589v12h1v-12zM504 585v11h1v-11zM505 577v11h1v-11zM506 573v11h1v-11zM507 566v12h1v-12zM508 562v11h1v-11zM509 557v9h1v-9zM510 554v7h1v-7zM511 553v7h1v-7zM512 550v8h1v-8zM513 528v27h1v-27zM514 508v24h1v-24zM515 492v21h1v-21zM516 490v14h1v-14zM517 496v13h1v-13zM518 504v10h1v-10zM519 507v10h1v-10zM520 508v8h1v-8zM521 512v12h1v-12zM522 514v13h1v-13zM523 515v16h1v-16zM524 521v13h1v-13zM525 526v12h1v-12zM526 529v12h1v-12zM527 524v17h1v-17zM528 514v17h1v-17zM529 512v9h1v-9zM530 514v13h1v-13zM531 521v11h1v-11zM532 529v6h1v-6zM533 522v10h1v-10zM534 516v12h1v-12zM535 511v11h1v-11zM536 505v11h1v-11zM537 499v13h1v-13zM538 493v11h1v-11zM539 488v9h1v-9zM540 484v8h1v-8zM541 477v13h1v-13zM542 474v11h1v-11zM543 470v10h1v-10zM544 468v10h1v-10zM545 467v9h1v-9zM546 465v10h1v-10zM547 466v6h1v-6zM548 465v11h1v-11zM549 469v11h1v-11zM550 474v10h1v-10zM551 477v9h1v-9zM552 479v10h1v-10zM553 483v7h1v-7zM554 486v10h1v-10zM555 488v13h1v-13zM556 495v10h1v-10zM557 498v8h1v-8zM558 501v5h1v-5zM559 503v7h1v-7zM560 502v11h1v-11zM561 506v13h1v-13zM562 508v10h1v-10zM563 514v13h1v-13zM564 514v17h1v-17zM565 520v13h1v-13zM566 528v6h1v-6zM567 529v8h1v-8zM568 526v10h1v-10zM569 529v5h1v-5zM570 529v9h1v-9zM571 531v8h1v-8zM572 532v9h1v-9zM573 534v9h1v-9zM574 538v7h1v-7zM575 542v5h1v-5zM576 544v8h1v-8zM577 549v13h1v-13zM578 557v17h1v-17zM579 569v25h1v-25zM580 588v14h1v-14zM581 588v14h1v-14zM582 579v16h1v-16zM583 563v22h1v-22zM584 557v11h1v-11zM585 560v16h1v-16zM586 571v12h1v-12zM587 575v8h1v-8zM588 577v8h1v-8zM589 575v8h1v-8zM590 570v14h1v-14zM591 565v13h1v-13zM592 556v15h1v-15zM593 547v12h1v-12zM594 538v15h1v-15zM595 535v11h1v-11zM596 529v12h1v-12zM597 524v12h1v-12zM598 516v14h1v-14zM599 510v15h1v-15zM600 508v12h1v-12zM601 501v13h1v-13zM602 504v11h1v-11zM603 506v14h1v-14zM604 513v15h1v-15zM605 518v10h1v-10zM606 522v10h1v-10zM607 524v13h1v-13zM608 529v11h1v-11zM609 523v12h1v-12zM610 518v14h1v-14zM611 513v14h1v-14zM612 511v10h1v-10zM613 510v8h1v-8zM614 507v8h1v-8zM615 509v6h1v-6zM616 510v6h1v-6zM617 511v7h1v-7zM618 512v6h1v-6zM619 508v9h1v-9zM620 505v7h1v-7zM621 503v8h1v-8zM622 506v6h1v-6zM623 507v9h1v-9zM624 510v6h1v-6zM625 506v8h1v-8zM626 504v8h1v-8zM627 503v10h1v-10zM628 503v13h1v-13zM629 508v8h1v-8zM630 506v10h1v-10zM631 499v18h1v-18zM632 489v19h1v-19zM633 487v12h1v-12zM634 489v18h1v-18zM635 498v14h1v-14zM636 508v12h1v-12zM637 508v8h1v-8zM638 508v8h1v-8zM639 507v9h1v-9zM640 508v7h1v-7zM641 509v7h1v-7zM642 512v5h1v-5zM643 513v8h1v-8zM644 510v9h1v-9zM645 506v10h1v-10zM646 506v11h1v-11zM647 513v14h1v-14zM648 519v14h1v-14zM649 525v5h1v-5zM650 526v6h1v-6zM651 521v10h1v-10zM652 513v18h1v-18zM653 504v16h1v-16zM654 498v11h1v-11zM655 491v13h1v-13zM656 488v11h1v-11zM657 484v9h1v-9zM658 479v10h1v-10zM659 460v22h1v-22zM660 457v6h1v-6zM661 453v9h1v-9zM662 449v8h1v-8zM663 447v12h1v-12zM664 456v12h1v-12zM665 456v11h1v-11zM666 452v10h1v-10zM667 449v12h1v-12zM668 449v13h1v-13zM669 455v7h1v-7zM670 458v9h1v-9zM671 452v16h1v-16zM672 445v17h1v-17zM673 432v22h1v-22zM674 427v13h1v-13zM675 427v10h1v-10zM676 430v11h1v-11zM677 434v11h1v-11zM678 437v11h1v-11zM679 430v12h1v-12zM680 428v12h1v-12zM681 426v6h1v-6zM682 424v7h1v-7zM683 420v9h1v-9zM684 419v6h1v-6zM685 418v6h1v-6zM686 415v6h1v-6zM687 413v7h1v-7zM688 411v7h1v-7zM689 408v7h1v-7zM690 399v14h1v-14zM691 394v11h1v-11zM692 389v11h1v-11zM693 382v13h1v-13zM694 377v13h1v-13zM695 379v10h1v-10zM696 382v12h1v-12zM697 386v8h1v-8zM698 390v8h1v-8zM699 391v4h1v-4zM700 392v5h1v-5zM701 391v6h1v-6zM702 388v8h1v-8zM703 387v8h1v-8zM704 385v9h1v-9zM705 382v9h1v-9zM706 386v12h1v-12zM707 391v11h1v-11zM708 395v9h1v-9zM709 399v8h1v-8zM710 400v12h1v-12zM711 402v12h1v-12zM712 407v13h1v-13zM713 414v11h1v-11zM714 414v10h1v-10zM715 416v14h1v-14zM716 420v12h1v-12zM717 425v8h1v-8zM718 428v12h1v-12zM719 432v10h1v-10zM720 436v9h1v-9zM721 430v15h1v-15zM722 427v10h1v-10zM723 427v5h1v-5zM724 424v7h1v-7zM725 425v4h1v-4zM726 424v4h1v-4zM727 421v6h1v-6zM728 421v6h1v-6zM729 420v5h1v-5zM730 420v10h1v-10zM731 423v9h1v-9zM732 430v7h1v-7zM733 425v13h1v-13zM734 418v13h1v-13zM735 411v13h1v-13zM736 413v12h1v-12zM737 417v11h1v-11zM738 417v12h1v-12zM739 411v14h1v-14zM740 402v14h1v-14zM741 401v8h1v-8zM742 403v8h1v-8zM743 405v9h1v-9zM744 406v10h1v-10zM745 408v10h1v-10zM746 412v9h1v-9zM747 414v9h1v-9zM748 417v6h1v-6zM749 418v7h1v-7zM750 406v21h1v-21zM751 399v13h1v-13zM752 401v7h1v-7zM753 401v11h1v-11zM754 401v13h1v-13zM755 397v11h1v-11zM756 392v11h1v-11zM757 386v11h1v-11zM758 379v13h1v-13zM759 375v9h1v-9zM760 373v7h1v-7zM761 372v10h1v-10zM762 375v19h1v-19zM763 388v16h1v-16zM764 398v12h1v-12zM765 403v8h1v-8zM766 399v8h1v-8zM767 395v7h1v-7zM768 394v7h1v-7zM769 391v6h1v-6zM770 389v7h1v-7zM771 388v4h1v-4zM772 388v8h1v-8zM773 393v6h1v-6zM774 394v11h1v-11zM775 399v13h1v-13zM776 403v14h1v-14zM777 412v11h1v-11zM778 418v5h1v-5zM779 415v10h1v-10zM780 417v12h1v-12zM781 419v12h1v-12zM782 422v9h1v-9zM783 425v10h1v-10zM784 431v13h1v-13zM785 439v14h1v-14zM786 439v15h1v-15zM787 434v13h1v-13zM788 437v23h1v-23zM789 452v20h1v-20zM790 457v14h1v-14zM791 446v17h1v-17zM792 438v15h1v-15zM793 435v10h1v-10zM794 430v10h1v-10zM795 426v11h1v-11zM796 425v7h1v-7zM797 428v11h1v-11zM798 432v12h1v-12zM799 439v10h1v-10zM800 444v31h1v-31zM801 455v22h1v-22zM802 436v26h1v-26zM803 435v19h1v-19zM804 448v19h1v-19zM805 459v13h1v-13zM806 466v10h1v-10zM807 472v9h1v-9zM808 474v9h1v-9zM809 469v10h1v-10zM810 463v12h1v-12zM811 459v12h1v-12zM812 454v12h1v-12zM813 451v9h1v-9zM814 446v10h1v-10zM815 442v11h1v-11zM816 440v9h1v-9zM817 437v8h1v-8zM818 435v7h1v-7zM819 438v8h1v-8zM820 435v10h1v-10zM821 440v8h1v-8zM822 437v13h1v-13zM823 442v18h1v-18zM824 449v11h1v-11zM825 443v12h1v-12zM826 433v17h1v-17zM827 432v11h1v-11zM828 435v12h1v-12zM829 441v12h1v-12zM830 449v11h1v-11zM831 454v11h1v-11zM832 462v8h1v-8zM833 465v9h1v-9zM834 469v8h1v-8zM835 471v8h1v-8zM836 474v6h1v-6zM837 477v5h1v-5zM838 476v8h1v-8zM839 468v15h1v-15zM840 463v10h1v-10zM841 461v7h1v-7zM842 459v6h1v-6zM843 456v9h1v-9zM844 457v15h1v-15zM845 463v15h1v-15zM846 469v12h1v-12zM847 473v11h1v-11zM848 477v5h1v-5zM849 478v6h1v-6zM850 476v10h1v-10zM851 478v13h1v-13zM852 484v12h1v-12zM853 490v10h1v-10zM854 479v20h1v-20zM855 462v23h1v-23zM856 463v9h1v-9zM857 463v8h1v-8zM858 465v10h1v-10zM859 466v10h1v-10zM860 469v9h1v-9zM861 471v10h1v-10zM862 475v10h1v-10zM863 476v11h1v-11zM864 483v10h1v-10zM865 487v11h1v-11zM866 492v9h1v-9zM867 493v13h1v-13zM868 499v9h1v-9zM869 499v8h1v-8zM870 492v13h1v-13zM871 487v13h1v-13zM872 483v10h1v-10zM873 477v10h1v-10zM874 474v9h1v-9zM875 473v8h1v-8zM876 476v7h1v-7zM877 478v5h1v-5zM878 477v8h1v-8zM879 474v7h1v-7zM880 474v8h1v-8zM881 479v12h1v-12zM882 485v12h1v-12zM883 489v9h1v-9zM884 486v9h1v-9zM885 478v14h1v-14zM886 470v14h1v-14zM887 463v14h1v-14zM888 459v14h1v-14zM889 459v10h1v-10zM890 454v11h1v-11zM891 453v11h1v-11zM892 447v13h1v-13zM893 447v9h1v-9zM894 446v6h1v-6zM895 444v7h1v-7zM896 441v9h1v-9zM897 441v7h1v-7zM898 437v8h1v-8zM899 435v9h1v-9zM900 427v12h1v-12zM901 422v11h1v-11zM902 418v10h1v-10zM903 414v9h1v-9zM904 411v9h1v-9zM905 404v14h1v-14zM906 400v9h1v-9zM907 397v37h1v-37zM908 428v33h1v-33zM909 447v13h1v-13zM910 440v12h1v-12zM911 434v14h1v-14zM912 427v14h1v-14zM913 423v11h1v-11zM914 427v16h1v-16zM915 438v14h1v-14zM916 447v11h1v-11zM917 452v12h1v-12zM918 459v11h1v-11zM919 464v16h1v-16zM920 476v10h1v-10zM921 474v12h1v-12zM922 471v8h1v-8zM923 470v9h1v-9zM924 471v8h1v-8zM925 476v7h1v-7zM926 466v19h1v-19zM927 456v19h1v-19zM928 449v16h1v-16zM929 444v13h1v-13zM930 437v16h1v-16zM931 429v15h1v-15zM932 427v11h1v-11zM933 420v12h1v-12zM934 416v11h1v-11zM935 409v11h1v-11zM936 402v15h1v-15zM937 393v16h1v-16zM938 389v11h1v-11zM939 388v6h1v-6zM940 384v9h1v-9zM941 382v10h1v-10zM942 381v8h1v-8zM943 377v7h1v-7zM944 374v8h1v-8zM945 370v9h1v-9zM946 367v9h1v-9zM947 365v8h1v-8zM948 366v6h1v-6zM949 365v7h1v-7zM950 365v6h1v-6zM951 364v9h1v-9zM952 368v11h1v-11zM953 373v12h1v-12zM954 375v10h1v-10zM955 364v17h1v-17zM956 357v15h1v-15zM957 358v7h1v-7zM958 357v13h1v-13zM959 364v19h1v-19zM960 376v15h1v-15zM961 383v9h1v-9zM962 384v7h1v-7zM963 382v9h1v-9zM964 380v10h1v-10zM965 374v9h1v-9zM966 369v9h1v-9zM967 373v12h1v-12zM968 377v13h1v-13zM969 385v11h1v-11zM970 384v10h1v-10zM971 377v12h1v-12zM972 373v12h1v-12zM973 374v11h1v-11zM974 376v12h1v-12zM975 382v10h1v-10zM976 379v13h1v-13zM977 376v10h1v-10zM978 371v11h1v-11zM979 367v11h1v-11zM980 365v11h1v-11zM981 364v10h1v-10zM982 362v8h1v-8zM983 362v4h1v-4zM984 360v6h1v-6zM985 359v6h1v-6zM986 358v5h1v-5zM987 355v7h1v-7zM988 353v8h1v-8zM989 349v9h1v-9zM990 345v9h1v-9zM991 342v8h1v-8zM992 342v9h1v-9zM993 347v7h1v-7zM994 342v15h1v-15zM995 338v10h1v-10zM996 332v13h1v-13zM997 329v9h1v-9zM998 319v14h1v-14zM999 312v15h1v-15zM1000 305v15h1v-15zM1001 307v11h1v-11zM1002 309v13h1v-13zM1003 313v13h1v-13zM1004 313v10h1v-10zM1005 311v11h1v-11zM1006 304v12h1v-12zM1007 302v8h1v-8zM1008 301v9h1v-9zM1009 302v6h1v-6zM1010 295v12h1v-12zM1011 291v10h1v-10zM1012 292v8h1v-8zM1013 293v12h1v-12zM1014 297v10h1v-10zM1015 296v13h1v-13zM1016 289v14h1v-14zM1017 286v12h1v-12zM1018 284v10h1v-10zM1019 283v10h1v-10zM1020 282v13h1v-13zM1021 289v20h1v-20zM1022 300v11h1v-11zM1023 305v7h1v-7zM1024 303v5h1v-5zM1025 303v8h1v-8zM1026 305v13h1v-13zM1027 313v11h1v-11zM1028 320v7h1v-7zM1029 317v8h1v-8zM1030 313v8h1v-8zM1031 308v9h1v-9zM1032 305v9h1v-9zM1033 303v9h1v-9zM1034 307v21h1v-21zM1035 320v18h1v-18zM1036 322v11h1v-11zM1037 321v10h1v-10zM1038 317v12h1v-12zM1039 311v14h1v-14zM1040 308v10h1v-10zM1041 302v13h1v-13zM1042 299v14h1v-14zM1043 298v8h1v-8zM1044 300v14h1v-14zM1045 307v18h1v-18zM1046 318v13h1v-13zM1047 321v11h1v-11zM1048 318v10h1v-10zM1049 317v9h1v-9zM1050 318v3h1v-3zM1051 316v6h1v-6zM1052 316v14h1v-14zM1053 324v12h1v-12zM1054 330v6h1v-6zM1055 329v6h1v-6zM1056 328v8h1v-8zM1057 327v6h1v-6zM1058 328v14h1v-14zM1059 338v14h1v-14zM1060 345v18h1v-18zM1061 357v17h1v-17zM1062 355v17h1v-17zM1063 351v13h1v-13zM1064 346v9h1v-9zM1065 341v10h1v-10zM1066 340v15h1v-15zM1067 348v13h1v-13zM1068 355v12h1v-12zM1069 364v11h1v-11zM1070 369v10h1v-10zM1071 374v8h1v-8zM1072 371v8h1v-8zM1073 368v7h1v-7zM1074 363v10h1v-10zM1075 360v10h1v-10zM1076 358v7h1v-7zM1077 349v13h1v-13zM1078 338v17h1v-17zM1079 330v19h1v-19zM1080 327v15h1v-15zM1081 332v14h1v-14zM1082 339v16h1v-16zM1083 344v13h1v-13zM1084 343v13h1v-13zM1085 342v9h1v-9zM1086 339v12h1v-12zM1087 339v8h1v-8zM1088 335v9h1v-9zM1089 333v9h1v-9zM1090 332v7h1v-7zM1091 335v9h1v-9zM1092 338v11h1v-11zM1093 345v7h1v-7zM1094 348v8h1v-8zM1095 351v7h1v-7zM1096 353v5h1v-5zM1097 355v6h1v-6zM1098 351v9h1v-9zM1099 347v8h1v-8zM1100 341v11h1v-11zM1101 330v17h1v-17zM1102 319v17h1v-17zM1103 310v16h1v-16zM1104 302v16h1v-16zM1105 300v8h1v-8zM1106 294v12h1v-12zM1107 293v9h1v-9zM1108 296v6h1v-6zM1109 296v9h1v-9zM1110 299v9h1v-9zM1111 290v14h1v-14zM1112 285v11h1v-11zM1113 281v8h1v-8zM1114 275v12h1v-12zM1115 267v14h1v-14zM1116 256v16h1v-16zM1117 258v13h1v-13zM1118 264v15h1v-15zM1119 271v10h1v-10zM1120 277v11h1v-11zM1121 279v13h1v-13zM1122 284v8h1v-8zM1123 286v7h1v-7zM1124 285v12h1v-12zM1125 271v21h1v-21zM1126 259v21h1v-21zM1127 252v12h1v-12zM1128 251v11h1v-11zM1129 245v13h1v-13zM1130 247v11h1v-11zM1131 249v12h1v-12zM1132 252v12h1v-12zM1133 257v9h1v-9zM1134 260v8h1v-8zM1135 262v9h1v-9zM1136 262v9h1v-9zM1137 260v7h1v-7zM1138 260v12h1v-12zM1139 266v12h1v-12zM1140 269v9h1v-9zM1141 263v11h1v-11zM1142 255v14h1v-14zM1143 246v16h1v-16zM1144 235v17h1v-17zM1145 234v8h1v-8zM1146 233v10h1v-10zM1147 235v11h1v-11zM1148 236v16h1v-16zM1149 242v11h1v-11zM1150 243v13h1v-13zM1151 245v12h1v-12zM1152 251v14h1v-14zM1153 258v17h1v-17zM1154 267v18h1v-18zM1155 273v12h1v-12zM1156 269v11h1v-11zM1157 263v13h1v-13zM1158 259v11h1v-11zM1159 259v7h1v-7zM1160 256v11h1v-11zM1161 261v13h1v-13zM1162 267v12h1v-12zM1163 274v4h1v-4zM1164 275v5h1v-5zM1165 240v38h1v-38zM1166 239v8h1v-8zM1167 237v8h1v-8zM1168 238v11h1v-11zM1169 241v12h1v-12zM1170 246v11h1v-11zM1171 250v10h1v-10zM399 716v4h1v-4zM400 716v4h1v-4zM401 716v4h1v-4zM402 714v7h1v-7zM403 714v5h1v-5zM404 714v5h1v-5zM405 708v10h1v-10zM406 701v13h1v-13zM407 692v15h1v-15zM408 690v8h1v-8zM409 693v7h1v-7zM410 692v10h1v-10zM411 692v8h1v-8zM412 693v10h1v-10zM413 692v8h1v-8zM414 690v8h1v-8zM415 686v14h1v-14zM416 688v9h1v-9zM417 688v12h1v-12zM418 690v13h1v-13zM419 694v9h1v-9zM420 696v9h1v-9zM421 700v5h1v-5zM422 696v7h1v-7zM423 697v6h1v-6zM424 695v6h1v-6zM425 690v9h1v-9zM426 682v13h1v-13zM427 678v9h1v-9zM428 672v9h1v-9zM429 662v16h1v-16zM430 653v14h1v-14zM431 651v6h1v-6zM432 653v4h1v-4zM433 650v9h1v-9zM434 653v9h1v-9zM435 657v9h1v-9zM436 661v9h1v-9zM437 648v19h1v-19zM438 637v21h1v-21zM439 626v18h1v-18zM440 610v22h1v-22zM441 604v16h1v-16zM442 605v12h1v-12zM443 611v9h1v-9zM444 615v8h1v-8zM445 615v10h1v-10zM446 613v6h1v-6zM447 612v5h1v-5zM448 610v10h1v-10zM449 615v8h1v-8zM450 604v18h1v-18zM451 597v14h1v-14zM452 577v24h1v-24zM453 568v13h1v-13zM454 571v6h1v-6zM455 571v10h1v-10zM456 571v7h1v-7zM457 566v10h1v-10zM458 565v20h1v-20zM459 578v16h1v-16zM460 589v11h1v-11zM461 595v13h1v-13zM462 596v10h1v-10zM463 596v6h1v-6zM464 595v13h1v-13zM465 604v14h1v-14zM466 603v14h1v-14zM467 589v18h1v-18zM468 579v15h1v-15zM469 571v14h1v-14zM470 554v22h1v-22zM471 544v14h1v-14zM472 547v10h1v-10zM473 550v13h1v-13zM474 553v10h1v-10zM475 545v13h1v-13zM476 538v14h1v-14zM477 536v20h1v-20zM478 549v25h1v-25zM479 563v19h1v-19zM480 563v21h1v-21zM481 556v15h1v-15zM482 549v14h1v-14zM483 543v16h1v-16zM484 545v8h1v-8zM485 547v15h1v-15zM486 553v16h1v-16zM487 562v9h1v-9zM488 565v13h1v-13zM489 572v10h1v-10zM490 576v12h1v-12zM491 579v11h1v-11zM492 583v11h1v-11zM493 588v12h1v-12zM494 593v18h1v-18zM495 603v18h1v-18zM496 616v9h1v-9zM497 620v8h1v-8zM498 620v10h1v-10zM499 622v8h1v-8zM500 612v16h1v-16zM501 608v13h1v-13zM502 599v12h1v-12zM503 595v11h1v-11zM504 589v12h1v-12zM505 585v11h1v-11zM506 577v11h1v-11zM507 573v11h1v-11zM508 566v12h1v-12zM509 562v11h1v-11zM510 557v9h1v-9zM511 554v7h1v-7zM512 553v7h1v-7zM513 550v8h1v-8zM514 528v27h1v-27zM515 508v24h1v-24zM516 492v21h1v-21zM517 490v14h1v-14zM518 496v13h1v-13zM519 504v10h1v-10zM520 507v10h1v-10zM521 508v8h1v-8zM522 512v12h1v-12zM523 514v13h1v-13zM524 515v16h1v-16zM525 521v13h1v-13zM526 526v12h1v-12zM527 529v12h1v-12zM528 524v17h1v-17zM529 514v17h1v-17zM530 512v9h1v-9zM531 514v13h1v-13zM532 521v11h1v-11zM533 529v6h1v-6zM534 522v10h1v-10zM535 516v12h1v-12zM536 511v11h1v-11zM537 505v11h1v-11zM538 499v13h1v-13zM539 493v11h1v-11zM540 488v9h1v-9zM541 484v8h1v-8zM542 477v13h1v-13zM543 474v11h1v-11zM544 470v10h1v-10zM545 468v10h1v-10zM546 467v9h1v-9zM547 465v10h1v-10zM548 466v6h1v-6zM549 465v11h1v-11zM550 469v11h1v-11zM551 474v10h1v-10zM552 477v9h1v-9zM553 479v10h1v-10zM554 483v7h1v-7zM555 486v10h1v-10zM556 488v13h1v-13zM557 495v10h1v-10zM558 498v8h1v-8zM559 501v5h1v-5zM560 503v7h1v-7zM561 502v11h1v-11zM562 506v13h1v-13zM563 508v10h1v-10zM564 514v13h1v-13zM565 514v17h1v-17zM566 520v13h1v-13zM567 528v6h1v-6zM568 529v8h1v-8zM569 526v10h1v-10zM570 529v5h1v-5zM571 529v9h1v-9zM572 531v8h1v-8zM573 532v9h1v-9zM574 534v9h1v-9zM575 538v7h1v-7zM576 542v5h1v-5zM577 544v8h1v-8zM578 549v13h1v-13zM579 557v17h1v-17zM580 569v25h1v-25zM581 588v14h1v-14zM582 588v14h1v-14zM583 579v16h1v-16zM584 563v22h1v-22zM585 557v11h1v-11zM586 560v16h1v-16zM587 571v12h1v-12zM588 575v8h1v-8zM589 577v8h1v-8zM590 575v8h1v-8zM591 570v14h1v-14zM592 565v13h1v-13zM593 556v15h1v-15zM594 547v12h1v-12zM595 538v15h1v-15zM596 535v11h1v-11zM597 529v12h1v-12zM598 524v12h1v-12zM599 516v14h1v-14zM600 510v15h1v-15zM601 508v12h1v-12zM602 501v13h1v-13zM603 504v11h1v-11zM604 506v14h1v-14zM605 513v15h1v-15zM606 518v10h1v-10zM607 522v10h1v-10zM608 524v13h1v-13zM609 529v11h1v-11zM610 523v12h1v-12zM611 518v14h1v-14zM612 513v14h1v-14zM613 511v10h1v-10zM614 510v8h1v-8zM615 507v8h1v-8zM616 509v6h1v-6zM617 510v6h1v-6zM618 511v7h1v-7zM619 512v6h1v-6zM620 508v9h1v-9zM621 505v7h1v-7zM622 503v8h1v-8zM623 506v6h1v-6zM624 507v9h1v-9zM625 510v6h1v-6zM626 506v8h1v-8zM627 504v8h1v-8zM628 503v10h1v-10zM629 503v13h1v-13zM630 508v8h1v-8zM631 506v10h1v-10zM632 499v18h1v-18zM633 489v19h1v-19zM634 487v12h1v-12zM635 489v18h1v-18zM636 498v14h1v-14zM637 508v12h1v-12zM638 508v8h1v-8zM639 508v8h1v-8zM640 507v9h1v-9zM641 508v7h1v-7zM642 509v7h1v-7zM643 512v5h1v-5zM644 513v8h1v-8zM645 510v9h1v-9zM646 506v10h1v-10zM647 506v11h1v-11zM648 513v14h1v-14zM649 519v14h1v-14zM650 525v5h1v-5zM651 526v6h1v-6zM652 521v10h1v-10zM653 513v18h1v-18zM654 504v16h1v-16zM655 498v11h1v-11zM656 491v13h1v-13zM657 488v11h1v-11zM658 484v9h1v-9zM659 479v10h1v-10zM660 460v22h1v-22zM661 457v6h1v-6zM662 453v9h1v-9zM663 449v8h1v-8zM664 447v12h1v-12zM665 456v12h1v-12zM666 456v11h1v-11zM667 452v10h1v-10zM668 449v12h1v-12zM669 449v13h1v-13zM670 455v7h1v-7zM671 458v9h1v-9zM672 452v16h1v-16zM673 445v17h1v-17zM674 432v22h1v-22zM675 427v13h1v-13zM676 427v10h1v-10zM677 430v11h1v-11zM678 434v11h1v-11zM679 437v11h1v-11zM680 430v12h1v-12zM681 428v12h1v-12zM682 426v6h1v-6zM683 424v7h1v-7zM684 420v9h1v-9zM685 419v6h1v-6zM686 418v6h1v-6zM687 415v6h1v-6zM688 413v7h1v-7zM689 411v7h1v-7zM690 408v7h1v-7zM691 399v14h1v-14zM692 394v11h1v-11zM693 389v11h1v-11zM694 382v13h1v-13zM695 377v13h1v-13zM696 379v10h1v-10zM697 382v12h1v-12zM698 386v8h1v-8zM699 390v8h1v-8zM700 391v4h1v-4zM701 392v5h1v-5zM702 391v6h1v-6zM703 388v8h1v-8zM704 387v8h1v-8zM705 385v9h1v-9zM706 382v9h1v-9zM707 386v12h1v-12zM708 391v11h1v-11zM709 395v9h1v-9zM710 399v8h1v-8zM711 400v12h1v-12zM712 402v12h1v-12zM713 407v13h1v-13zM714 414v11h1v-11zM715 414v10h1v-10zM716 416v14h1v-14zM717 420v12h1v-12zM718 425v8h1v-8zM719 428v12h1v-12zM720 432v10h1v-10zM721 436v9h1v-9zM722 430v15h1v-15zM723 427v10h1v-10zM724 427v5h1v-5zM725 424v7h1v-7zM726 425v4h1v-4zM727 424v4h1v-4zM728 421v6h1v-6zM729 421v6h1v-6zM730 420v5h1v-5zM731 420v10h1v-10zM732 423v9h1v-9zM733 430v7h1v-7zM734 425v13h1v-13zM735 418v13h1v-13zM736 411v13h1v-13zM737 413v12h1v-12zM738 417v11h1v-11zM739 417v12h1v-12zM740 411v14h1v-14zM741 402v14h1v-14zM742 401v8h1v-8zM743 403v8h1v-8zM744 405v9h1v-9zM745 406v10h1v-10zM746 408v10h1v-10zM747 412v9h1v-9zM748 414v9h1v-9zM749 417v6h1v-6zM750 418v7h1v-7zM751 406v21h1v-21zM752 399v13h1v-13zM753 401v7h1v-7zM754 401v11h1v-11zM755 401v13h1v-13zM756 397v11h1v-11zM757 392v11h1v-11zM758 386v11h1v-11zM759 379v13h1v-13zM760 375v9h1v-9zM761 373v7h1v-7zM762 372v10h1v-10zM763 375v19h1v-19zM764 388v16h1v-16zM765 398v12h1v-12zM766 403v8h1v-8zM767 399v8h1v-8zM768 395v7h1v-7zM769 394v7h1v-7zM770 391v6h1v-6zM771 389v7h1v-7zM772 388v4h1v-4zM773 388v8h1v-8zM774 393v6h1v-6zM775 394v11h1v-11zM776 399v13h1v-13zM777 403v14h1v-14zM778 412v11h1v-11zM779 418v5h1v-5zM780 415v10h1v-10zM781 417v12h1v-12zM782 419v12h1v-12zM783 422v9h1v-9zM784 425v10h1v-10zM785 431v13h1v-13zM786 439v14h1v-14zM787 439v15h1v-15zM788 434v13h1v-13zM789 437v23h1v-23zM790 452v20h1v-20zM791 457v14h1v-14zM792 446v17h1v-17zM793 438v15h1v-15zM794 435v10h1v-10zM795 430v10h1v-10zM796 426v11h1v-11zM797 425v7h1v-7zM798 428v11h1v-11zM799 432v12h1v-12zM800 439v10h1v-10zM801 444v31h1v-31zM802 455v22h1v-22zM803 436v26h1v-26zM804 435v19h1v-19zM805 448v19h1v-19zM806 459v13h1v-13zM807 466v10h1v-10zM808 472v9h1v-9zM809 474v9h1v-9zM810 469v10h1v-10zM811 463v12h1v-12zM812 459v12h1v-12zM813 454v12h1v-12zM814 451v9h1v-9zM815 446v10h1v-10zM816 442v11h1v-11zM817 440v9h1v-9zM818 437v8h1v-8zM819 435v7h1v-7zM820 438v8h1v-8zM821 435v10h1v-10zM822 440v8h1v-8zM823 437v13h1v-13zM824 442v18h1v-18zM825 449v11h1v-11zM826 443v12h1v-12zM827 433v17h1v-17zM828 432v11h1v-11zM829 435v12h1v-12zM830 441v12h1v-12zM831 449v11h1v-11zM832 454v11h1v-11zM833 462v8h1v-8zM834 465v9h1v-9zM835 469v8h1v-8zM836 471v8h1v-8zM837 474v6h1v-6zM838 477v5h1v-5zM839 476v8h1v-8zM840 468v15h1v-15zM841 463v10h1v-10zM842 461v7h1v-7zM843 459v6h1v-6zM844 456v9h1v-9zM845 457v15h1v-15zM846 463v15h1v-15zM847 469v12h1v-12zM848 473v11h1v-11zM849 477v5h1v-5zM850 478v6h1v-6zM851 476v10h1v-10zM852 478v13h1v-13zM853 484v12h1v-12zM854 490v10h1v-10zM855 479v20h1v-20zM856 462v23h1v-23zM857 463v9h1v-9zM858 463v8h1v-8zM859 465v10h1v-10zM860 466v10h1v-10zM861 469v9h1v-9zM862 471v10h1v-10zM863 475v10h1v-10zM864 476v11h1v-11zM865 483v10h1v-10zM866 487v11h1v-11zM867 492v9h1v-9zM868 493v13h1v-13zM869 499v9h1v-9zM870 499v8h1v-8zM871 492v13h1v-13zM872 487v13h1v-13zM873 483v10h1v-10zM874 477v10h1v-10zM875 474v9h1v-9zM876 473v8h1v-8zM877 476v7h1v-7zM878 478v5h1v-5zM879 477v8h1v-8zM880 474v7h1v-7zM881 474v8h1v-8zM882 479v12h1v-12zM883 485v12h1v-12zM884 489v9h1v-9zM885 486v9h1v-9zM886 478v14h1v-14zM887 470v14h1v-14zM888 463v14h1v-14zM889 459v14h1v-14zM890 459v10h1v-10zM891 454v11h1v-11zM892 453v11h1v-11zM893 447v13h1v-13zM894 447v9h1v-9zM895 446v6h1v-6zM896 444v7h1v-7zM897 441v9h1v-9zM898 441v7h1v-7zM899 437v8h1v-8zM900 435v9h1v-9zM901 427v12h1v-12zM902 422v11h1v-11zM903 418v10h1v-10zM904 414v9h1v-9zM905 411v9h1v-9zM906 404v14h1v-14zM907 400v9h1v-9zM908 397v37h1v-37zM909 428v33h1v-33zM910 447v13h1v-13zM911 440v12h1v-12zM912 434v14h1v-14zM913 427v14h1v-14zM914 423v11h1v-11zM915 427v16h1v-16zM916 438v14h1v-14zM917 447v11h1v-11zM918 452v12h1v-12zM919 459v11h1v-11zM920 464v16h1v-16zM921 476v10h1v-10zM922 474v12h1v-12zM923 471v8h1v-8zM924 470v9h1v-9zM925 471v8h1v-8zM926 476v7h1v-7zM927 466v19h1v-19zM928 456v19h1v-19zM929 449v16h1v-16zM930 444v13h1v-13zM931 437v16h1v-16zM932 429v15h1v-15zM933 427v11h1v-11zM934 420v12h1v-12zM935 416v11h1v-11zM936 409v11h1v-11zM937 402v15h1v-15zM938 393v16h1v-16zM939 389v11h1v-11zM940 388v6h1v-6zM941 384v9h1v-9zM942 382v10h1v-10zM943 381v8h1v-8zM944 377v7h1v-7zM945 374v8h1v-8zM946 370v9h1v-9zM947 367v9h1v-9zM948 365v8h1v-8zM949 366v6h1v-6zM950 365v7h1v-7zM951 365v6h1v-6zM952 364v9h1v-9zM953 368v11h1v-11zM954 373v12h1v-12zM955 375v10h1v-10zM956 364v17h1v-17zM957 357v15h1v-15zM958 358v7h1v-7zM959 357v13h1v-13zM960 364v19h1v-19zM961 376v15h1v-15zM962 383v9h1v-9zM963 384v7h1v-7zM964 382v9h1v-9zM965 380v10h1v-10zM966 374v9h1v-9zM967 369v9h1v-9zM968 373v12h1v-12zM969 377v13h1v-13zM970 385v11h1v-11zM971 384v10h1v-10zM972 377v12h1v-12zM973 373v12h1v-12zM974 374v11h1v-11zM975 376v12h1v-12zM976 382v10h1v-10zM977 379v13h1v-13zM978 376v10h1v-10zM979 371v11h1v-11zM980 367v11h1v-11zM981 365v11h1v-11zM982 364v10h1v-10zM983 362v8h1v-8zM984 362v4h1v-4zM985 360v6h1v-6zM986 359v6h1v-6zM987 358v5h1v-5zM988 355v7h1v-7zM989 353v8h1v-8zM990 349v9h1v-9zM991 345v9h1v-9zM992 342v8h1v-8zM993 342v9h1v-9zM994 347v7h1v-7zM995 342v15h1v-15zM996 338v10h1v-10zM997 332v13h1v-13zM998 329v9h1v-9zM999 319v14h1v-14zM1000 312v15h1v-15zM1001 305v15h1v-15zM1002 307v11h1v-11zM1003 309v13h1v-13zM1004 313v13h1v-13zM1005 313v10h1v-10zM1006 311v11h1v-11zM1007 304v12h1v-12zM1008 302v8h1v-8zM1009 301v9h1v-9zM1010 302v6h1v-6zM1011 295v12h1v-12zM1012 291v10h1v-10zM1013 292v8h1v-8zM1014 293v12h1v-12zM1015 297v10h1v-10zM1016 296v13h1v-13zM1017 289v14h1v-14zM1018 286v12h1v-12zM1019 284v10h1v-10zM1020 283v10h1v-10zM1021 282v13h1v-13zM1022 289v20h1v-20zM1023 300v11h1v-11zM1024 305v7h1v-7zM1025 303v5h1v-5zM1026 303v8h1v-8zM1027 305v13h1v-13zM1028 313v11h1v-11zM1029 320v7h1v-7zM1030 317v8h1v-8zM1031 313v8h1v-8zM1032 308v9h1v-9zM1033 305v9h1v-9zM1034 303v9h1v-9zM1035 307v21h1v-21zM1036 320v18h1v-18zM1037 322v11h1v-11zM1038 321v10h1v-10zM1039 317v12h1v-12zM1040 311v14h1v-14zM1041 308v10h1v-10zM1042 302v13h1v-13zM1043 299v14h1v-14zM1044 298v8h1v-8zM1045 300v14h1v-14zM1046 307v18h1v-18zM1047 318v13h1v-13zM1048 321v11h1v-11zM1049 318v10h1v-10zM1050 317v9h1v-9zM1051 318v3h1v-3zM1052 316v6h1v-6zM1053 316v14h1v-14zM1054 324v12h1v-12zM1055 330v6h1v-6zM1056 329v6h1v-6zM1057 328v8h1v-8zM1058 327v6h1v-6zM1059 328v14h1v-14zM1060 338v14h1v-14zM1061 345v18h1v-18zM1062 357v17h1v-17zM1063 355v17h1v-17zM1064 351v13h1v-13zM1065 346v9h1v-9zM1066 341v10h1v-10zM1067 340v15h1v-15zM1068 348v13h1v-13zM1069 355v12h1v-12zM1070 364v11h1v-11zM1071 369v10h1v-10zM1072 374v8h1v-8zM1073 371v8h1v-8zM1074 368v7h1v-7zM1075 363v10h1v-10zM1076 360v10h1v-10zM1077 358v7h1v-7zM1078 349v13h1v-13zM1079 338v17h1v-17zM1080 330v19h1v-19zM1081 327v15h1v-15zM1082 332v14h1v-14zM1083 339v16h1v-16zM1084 344v13h1v-13zM1085 343v13h1v-13zM1086 342v9h1v-9zM1087 339v12h1v-12zM1088 339v8h1v-8zM1089 335v9h1v-9zM1090 333v9h1v-9zM1091 332v7h1v-7zM1092 335v9h1v-9zM1093 338v11h1v-11zM1094 345v7h1v-7zM1095 348v8h1v-8zM1096 351v7h1v-7zM1097 353v5h1v-5zM1098 355v6h1v-6zM1099 351v9h1v-9zM1100 347v8h1v-8zM1101 341v11h1v-11zM1102 330v17h1v-17zM1103 319v17h1v-17zM1104 310v16h1v-16zM1105 302v16h1v-16zM1106 300v8h1v-8zM1107 294v12h1v-12zM1108 293v9h1v-9zM1109 296v6h1v-6zM1110 296v9h1v-9zM1111 299v9h1v-9zM1112 290v14h1v-14zM1113 285v11h1v-11zM1114 281v8h1v-8zM1115 275v12h1v-12zM1116 267v14h1v-14zM1117 256v16h1v-16zM1118 258v13h1v-13zM1119 264v15h1v-15zM1120 271v10h1v-10zM1121 277v11h1v-11zM1122 279v13h1v-13zM1123 284v8h1v-8zM1124 286v7h1v-7zM1125 285v12h1v-12zM1126 271v21h1v-21zM1127 259v21h1v-21zM1128 252v12h1v-12zM1129 251v11h1v-11zM1130 245v13h1v-13zM1131 247v11h1v-11zM1132 249v12h1v-12zM1133 252v12h1v-12zM1134 257v9h1v-9zM1135 260v8h1v-8zM1136 262v9h1v-9zM1137 262v9h1v-9zM1138 260v7h1v-7zM1139 260v12h1v-12zM1140 266v12h1v-12zM1141 269v9h1v-9zM1142 263v11h1v-11zM1143 255v14h1v-14zM1144 246v16h1v-16zM1145 235v17h1v-17zM1146 234v8h1v-8zM1147 233v10h1v-10zM1148 235v11h1v-11zM1149 236v16h1v-16zM1150 242v11h1v-11zM1151 243v13h1v-13zM1152 245v12h1v-12zM1153 251v14h1v-14zM1154 258v17h1v-17zM1155 267v18h1v-18zM1156 273v12h1v-12zM1157 269v11h1v-11zM1158 263v13h1v-13zM1159 259v11h1v-11zM1160 259v7h1v-7zM1161 256v11h1v-11zM1162 261v13h1v-13zM1163 267v12h1v-12zM1164 274v4h1v-4zM1165 275v5h1v-5zM1166 240v38h1v-38zM1167 239v8h1v-8zM1168 237v8h1v-8zM1169 238v11h1v-11zM1170 241v12h1v-12zM1171 246v11h1v-11zM1172 250v10h1v-10z"/>
<g font-family="'Liberation Sans', Arial, sans-serif" font-size="14" fill="#000" text-rendering="geometricPrecision">
<text x="367.5" y="142.3" text-anchor="middle">€195</text>
<text x="1203.5" y="142.3" text-anchor="middle">€195</text>
<text x="367.5" y="259.8" text-anchor="middle">€156</text>
<text x="1203.5" y="259.8" text-anchor="middle">€156</text>
<text x="367.5" y="377.3" text-anchor="middle">€117</text>
<text x="1203.5" y="377.3" text-anchor="middle">€117</text>
<text x="367.5" y="494.8" text-anchor="middle">€78</text>
<text x="1203.5" y="494.8" text-anchor="middle">€78</text>
<text x="367.5" y="612.3" text-anchor="middle">€39</text>
<text x="1203.5" y="612.3" text-anchor="middle">€39</text>
<text x="367.5" y="729.8" text-anchor="middle">€0</text>
<text x="1203.5" y="729.8" text-anchor="middle">€0</text>
<text transform="translate(397.2,871) rotate(-63)" text-anchor="middle" y="5">0</text>
<text transform="translate(494.2,871) rotate(-63)" text-anchor="middle" y="5">4608</text>
<text transform="translate(591.2,871) rotate(-63)" text-anchor="middle" y="5">9216</text>
<text transform="translate(687.2,871) rotate(-63)" text-anchor="middle" y="5">13824</text>
<text transform="translate(784.2,871) rotate(-63)" text-anchor="middle" y="5">18432</text>
<text transform="translate(881.2,871) rotate(-63)" text-anchor="middle" y="5">23040</text>
<text transform="translate(977.2,871) rotate(-63)" text-anchor="middle" y="5">27648</text>
<text transform="translate(1074.2,871) rotate(-63)" text-anchor="middle" y="5">32256</text>
<text transform="translate(1171.2,871) rotate(-63)" text-anchor="middle" y="5">36864</text>
</g><g font-family="'Liberation Sans', Arial, sans-serif" font-size="13.8" fill="#000" text-rendering="geometricPrecision">
<text x="444.5" y="948">Winnings</text>
<text x="444.5" y="968">All-In EV</text>
<text x="657.5" y="948">Showdown Winnings</text>
<text x="870.5" y="948">Non Showdown Winnings</text>
</g>
<g font-family="'Liberation Sans', Arial, sans-serif" font-weight="bold" fill="#000">
<text x="784.5" y="920" font-size="19" text-anchor="middle">Hands</text>
<text transform="translate(331.5,487) rotate(-90)" font-size="23" text-anchor="middle">€</text>
<text transform="translate(1250.5,487) rotate(-90)" font-size="23" text-anchor="middle">€</text>
</g>
<g fill="none" stroke-width="1">
<rect x="398.5" y="933.5" width="638" height="40" stroke="#000"/>
<line x1="403" y1="942.5" x2="435" y2="942.5" stroke="#006400" stroke-width="2"/>
<line x1="403" y1="962.5" x2="435" y2="962.5" stroke="#ff0000"/>
<line x1="615" y1="942.5" x2="648" y2="942.5" stroke="#0000ff"/>
<line x1="827" y1="942.5" x2="860" y2="942.5" stroke="#ff0000"/>
</g>
</svg>
<div class="abs" id="filterbox">Filter: No Filter<br>All Hands<br>Winnings: €158.83</div>

<div class="abs" id="task"></div>
<div class="abs" id="startbtn" style="left:0;top:994px;width:88px;height:30px;border-radius:0 13px 13px 0/0 20px 20px 0;background:linear-gradient(#8fc78f 0,#6fba70 2px,#55ad58 9px,#46a84b 14px,#17a01b 16px,#12b416 24px,#10c414 30px);box-shadow:inset -2px 0 3px rgba(20,90,20,.55), 1px 0 1px #2a4fae"></div>
<svg class="abs" style="left:10.5px;top:999.5px" width="18" height="18" viewBox="0 0 18 18"><path d="M3.5 2.5 Q6 1 8 2.6 L7 7.4 Q5 6 2.6 7.4Z" fill="#e8502c"/><path d="M9 3 Q11.5 4.5 14 3 L13 7.8 Q10.5 9.4 8 7.8Z" fill="#8fc14b"/><path d="M2.3 8.6 Q4.8 7.2 6.8 8.7 L5.8 13.5 Q3.8 12 1.3 13.5Z" fill="#3f8fe0"/><path d="M7.8 9.2 Q10.3 10.7 12.8 9.2 L11.8 14 Q9.3 15.6 6.8 14Z" fill="#f8c230"/></svg>
<div class="abs" style="left:26px;top:997px;font-family:'Liberation Sans','DejaVu Sans',sans-serif;font-weight:bold;font-style:italic;font-size:16.5px;line-height:22px;color:#fff;text-shadow:1px 1px 1px #1d5e1d;letter-spacing:-.1px">пуск</div>
<svg class="abs" style="left:96px;top:998px" width="96" height="22" viewBox="96 998 96 22">
<ellipse cx="107" cy="1008.5" rx="5.2" ry="6.4" fill="none" stroke="#d81a1a" stroke-width="4.2"/><ellipse cx="107" cy="1008.5" rx="2.6" ry="5.2" fill="#e8d8e0"/>
<rect x="122.5" y="1003.5" width="15" height="12" fill="#3d86d8" stroke="#b9c2cc"/><rect x="123" y="1012" width="14" height="3" fill="#2c3f5e"/><rect x="124" y="1011" width="3" height="3" fill="#e9b534"/>
<path d="M146 1001 h12 l2 2 v13 h-14z" fill="#2b56c8"/><rect x="149" y="1001" width="7" height="5" fill="#dfe6f2"/><rect x="153" y="1002" width="2" height="3" fill="#2b56c8"/><rect x="148" y="1008" width="10" height="7" fill="#f4e9ea"/><rect x="148" y="1010" width="10" height="1.4" fill="#d6404a"/><rect x="148" y="1012.6" width="10" height="1.4" fill="#d6404a"/>
<circle cx="176" cy="1008.5" r="7.6" fill="#d21414" stroke="#1b0c0c" stroke-width="1"/><circle cx="176" cy="1008.5" r="6.3" fill="none" stroke="#f4d21c" stroke-width="1.8" stroke-dasharray="2.2 2.75"/><circle cx="176" cy="1008.5" r="4.6" fill="#efdc9c" stroke="#15100c" stroke-width="1.3"/><text x="176" y="1011.6" font-size="8" font-weight="bold" text-anchor="middle" font-family="'Liberation Sans',sans-serif" fill="#1b140c">$</text>
</svg>
<div class="tb" style="left:277px;width:156px"></div>
<div class="tb act" style="left:436px;width:158px"></div>
<div class="tb" style="left:597px;width:157px"></div>
<div class="tbt" style="left:304px">Vigorish · Покер фор…</div>
<div class="tbt" style="left:465px">Hold'em Manager Pro…</div>
<div class="tbt" style="left:624px">Безымянный - Paint.…</div>
<svg class="abs" style="left:284px;top:1000px" width="340" height="18" viewBox="284 1000 340 18">
<ellipse cx="293" cy="1009" rx="4.4" ry="5.6" fill="none" stroke="#d81a1a" stroke-width="3.4"/><ellipse cx="293" cy="1009" rx="2" ry="4.4" fill="#ead8de"/>
<g transform="translate(447,1002)"><path d="M7 0.5 L9 4 L13 3 L11 6.5 L14 9.5 L10 10 L9.5 14 L7 11 L4 14 L3.8 10 L0 9 L3 6.5 L1 3 L5 4Z" fill="#e66a1e"/><path d="M7 4 L8 6.3 L10.4 6.5 L8.6 8 L9.2 10.4 L7 9 L4.8 10.4 L5.4 8 L3.6 6.5 L6 6.3Z" fill="#fff"/></g>
<g transform="translate(606,1001)"><rect x="0.5" y="0.5" width="11" height="14" fill="#f4f6fa" stroke="#20242c"/><rect x="2" y="2" width="8" height="6" fill="#2c64c8"/><path d="M3 13 L14 5" stroke="#c01818" stroke-width="2"/><rect x="2" y="10" width="6" height="2" fill="#5b6270"/></g>
</svg>
<div class="abs" style="left:1150px;top:994px;width:130px;height:30px;background:linear-gradient(#2a56b0 0,#f4f8fe 1.2px,#e6effc 4px,#c8dbf6 9px,#a4c0ee 15px,#86aae6 21px,#5f8ad6 30px)"></div>
<div class="abs" style="left:1123px;top:1001px;width:13px;height:15px;background:#3a5fb8;font-family:'DejaVu Sans Condensed','DejaVu Sans',sans-serif;font-size:10.5px;line-height:14px;color:#fff;text-align:center;letter-spacing:-.3px">RL</div>
<svg class="abs" style="left:1140px;top:998px" width="96" height="22" viewBox="1140 998 96 22">
<defs><radialGradient id="cg" cx=".4" cy=".35" r=".7"><stop offset="0" stop-color="#fff"/><stop offset=".7" stop-color="#e4eefc"/><stop offset="1" stop-color="#9dbcf0"/></radialGradient></defs>
<circle cx="1151.5" cy="1009" r="8.6" fill="url(#cg)" stroke="#6d98e0" stroke-width="1.2"/><path d="M1154 1005 L1149.5 1009 L1154 1013" fill="none" stroke="#2a50b0" stroke-width="2"/>
<g id="net"><rect x="1167.5" y="1001.5" width="10" height="8" fill="#1f7adc" stroke="#a9b1ba" stroke-width="1"/><rect x="1162.5" y="1005.5" width="10" height="8" fill="#1226d2" stroke="#a9b1ba" stroke-width="1"/><path d="M1163.5 1006.5 h8 l-8 6z" fill="#3a58ee"/><rect x="1166" y="1014" width="3" height="1.5" fill="#7a828c"/><rect x="1164" y="1015.5" width="7" height="1.2" fill="#5a626c"/></g>
<ellipse cx="1185" cy="1014.5" rx="4.5" ry="2.2" fill="#c9b35c"/><circle cx="1186" cy="1011" r="2.2" fill="#d6bf62"/><ellipse cx="1188" cy="1008.5" rx="6" ry="5" fill="#e2cd78" stroke="#b39a3c" stroke-width="1"/><ellipse cx="1188.5" cy="1008.5" rx="3" ry="2.4" fill="#8a92a2"/><path d="M1186 1003.4 q5 -2.4 8.4 2.2 M1188 1001.6 q5 -1.2 7.6 3" fill="none" stroke="#d8741c" stroke-width="1.1"/>
<use href="#net" x="36"/>
<circle cx="1224" cy="1009" r="8" fill="#1c3c78" stroke="#6d8fc8" stroke-width=".8"/><text x="1224" y="1014" font-size="14" font-weight="bold" text-anchor="middle" font-family="'Liberation Serif',serif" fill="#fff">a</text>
</svg>
<div class="abs" style="left:1239px;top:1002px;font-family:'DejaVu Sans Condensed','DejaVu Sans',sans-serif;font-size:11px;line-height:14px;color:#000">18:52</div>
</body>
</html>
